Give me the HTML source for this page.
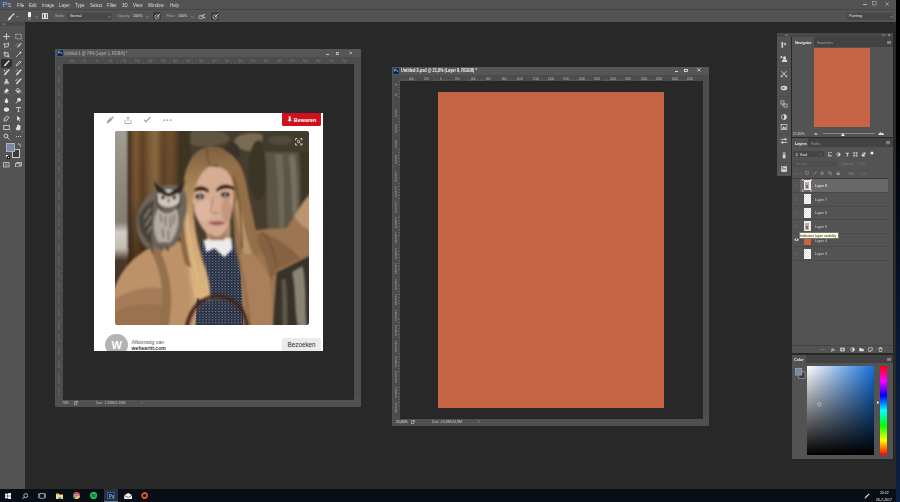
<!DOCTYPE html>
<html><head><meta charset="utf-8"><title>Photoshop</title>
<style>
*{box-sizing:border-box;margin:0;padding:0}
html,body{width:900px;height:502px;overflow:hidden;background:#282828;font-family:"Liberation Sans",sans-serif;}
.a{position:absolute}
.t{position:absolute;white-space:nowrap;line-height:1;color:#d6d6d6}
.m{top:2.5px;font-size:5.3px;color:#dedede;transform:scaleX(0.83);transform-origin:0 0}
.o{top:3.8px;font-size:3.6px}
.rl{font-size:2.3px;color:#8c8c8c}
#menubar{left:0;top:0;width:896px;height:9.4px;background:#535353}
#optbar{left:0;top:9px;width:896px;height:12.6px;background:#535353;border-top:0.7px solid #464646}
#tools{left:0;top:21.6px;width:25.3px;height:468px;background:#535353}
#taskbar{left:0;top:489.2px;width:896px;height:13px;background:#090d15}
#edge{left:896px;top:0;width:4px;height:502px;background:linear-gradient(#000 0%,#000 25%,#0a1a38 70%,#0c2044 100%)}
</style></head><body>
<div class="a" id="edge"></div>
<!-- MENU BAR -->
<div class="a" id="menubar">
 <div class="a" style="left:0;top:0;width:12.4px;height:9px;background:linear-gradient(to right,rgba(58,84,120,0.45),rgba(58,84,120,0.3) 70%,rgba(58,84,120,0))"></div><div class="t" style="left:2.6px;top:1.1px;font-size:7.4px;color:#a2b8d6;letter-spacing:-0.1px">Ps</div>
 <div class="t m" style="left:16.6px">File</div>
 <div class="t m" style="left:28.9px">Edit</div>
 <div class="t m" style="left:41.8px">Image</div>
 <div class="t m" style="left:59px">Layer</div>
 <div class="t m" style="left:75px">Type</div>
 <div class="t m" style="left:90px">Select</div>
 <div class="t m" style="left:106.9px">Filter</div>
 <div class="t m" style="left:122.4px">3D</div>
 <div class="t m" style="left:133.3px">View</div>
 <div class="t m" style="left:148.4px">Window</div>
 <div class="t m" style="left:170px">Help</div>
 <!-- window controls -->
 <div class="a" style="left:863px;top:4px;width:3.6px;height:0.7px;background:#b4b4b4"></div>
 <svg class="a" style="left:872px;top:1.4px" width="4.6" height="4.6" viewBox="0 0 4.6 4.6"><rect x="0.5" y="0.5" width="3.6" height="3.4" fill="none" stroke="#b4b4b4" stroke-width="0.6"/></svg>
 <svg class="a" style="left:884.6px;top:1.5px" width="4" height="4" viewBox="0 0 4 4"><path d="M0.3 0.3 L3.7 3.7 M3.7 0.3 L0.3 3.7" stroke="#c4c4c4" stroke-width="0.6" fill="none"/></svg>
</div>
<!-- OPTIONS BAR -->
<div class="a" id="optbar"><div class="a" style="left:0;top:1.1px">
 <svg class="a" style="left:6.5px;top:1.5px" width="8" height="8" viewBox="0 0 8 8"><path d="M6.9 0.9 L3.4 4.4" stroke="#e4e4e4" stroke-width="1.3" stroke-linecap="round" fill="none"/><path d="M2.7 3.9 L4 5.2 C3.4 6.8 2 7.2 0.7 7.2 C1.6 6.3 1.3 4.8 2.7 3.9Z" fill="#e4e4e4"/></svg>
 <div class="a" style="left:16.2px;top:5.2px;width:2.6px;height:0.6px;background:#808080"></div>
 <div class="a" style="left:27.8px;top:0.6px;width:3.2px;height:5px;background:#f4f4f4;border-radius:0.6px"></div>
 <div class="t" style="left:27.8px;top:7.8px;font-size:2.6px;color:#bbb">35</div>
 <svg class="a chev" style="left:35px;top:4.5px" width="3" height="2" viewBox="0 0 3 2"><path d="M0.2 0.2 L1.5 1.6 L2.8 0.2" stroke="#b8b8b8" stroke-width="0.5" fill="none"/></svg>
 <div class="a" style="left:42px;top:1.6px;width:6.4px;height:6.2px;background:#dcdcdc;border-radius:0.6px"></div>
 <div class="a" style="left:43px;top:3.4px;width:4.4px;height:3.4px;background:#535353"></div>
 <div class="a" style="left:44.4px;top:2.4px;width:1.6px;height:4.4px;background:#dcdcdc"></div>
 <div class="t o" style="left:55px;color:#a9a9a9">Mode:</div>
 <div class="a" style="left:67px;top:1.6px;width:45px;height:7.2px;background:#484848;border-radius:1px"></div>
 <div class="t o" style="left:70px;color:#e2e2e2">Normal</div>
 <svg class="a chev" style="left:108px;top:4.5px" width="3" height="2" viewBox="0 0 3 2"><path d="M0.2 0.2 L1.5 1.6 L2.8 0.2" stroke="#b8b8b8" stroke-width="0.5" fill="none"/></svg>
 <div class="t o" style="left:117px;color:#a9a9a9">Opacity:</div>
 <div class="t o" style="left:133px;color:#e2e2e2">100%</div>
 <svg class="a chev" style="left:146px;top:4.5px" width="3" height="2" viewBox="0 0 3 2"><path d="M0.2 0.2 L1.5 1.6 L2.8 0.2" stroke="#b8b8b8" stroke-width="0.5" fill="none"/></svg>
 <div class="a" style="left:152.5px;top:1.2px;width:8.5px;height:8px;background:#3c3c3c;border-radius:1px"></div>
 <svg class="a" style="left:153.5px;top:2px" width="7" height="7" viewBox="0 0 7 7"><circle cx="3" cy="4" r="2.1" stroke="#d8d8d8" stroke-width="0.6" fill="none"/><path d="M2.6 4.4 L6.2 0.8" stroke="#e4e4e4" stroke-width="0.9"/></svg>
 <div class="t o" style="left:166.6px;color:#a9a9a9">Flow:</div>
 <div class="t o" style="left:178px;color:#e2e2e2">100%</div>
 <svg class="a chev" style="left:191px;top:4.5px" width="3" height="2" viewBox="0 0 3 2"><path d="M0.2 0.2 L1.5 1.6 L2.8 0.2" stroke="#b8b8b8" stroke-width="0.5" fill="none"/></svg>
 <svg class="a" style="left:197.5px;top:2px" width="8" height="7" viewBox="0 0 8 7"><ellipse cx="3" cy="4" rx="2.4" ry="1.7" stroke="#d8d8d8" stroke-width="0.6" fill="none"/><path d="M3 3.8 L7 1 M5.2 4.6 L7.4 4.6" stroke="#e4e4e4" stroke-width="0.8"/></svg>
 <div class="a" style="left:210.5px;top:1.2px;width:8.5px;height:8px;background:#3c3c3c;border-radius:1px"></div>
 <svg class="a" style="left:211.5px;top:2px" width="7" height="7" viewBox="0 0 7 7"><circle cx="3" cy="4" r="2.1" stroke="#d8d8d8" stroke-width="0.6" fill="none"/><path d="M2.6 4.4 L6.2 0.8" stroke="#e4e4e4" stroke-width="0.9"/></svg>
 <!-- workspace dropdown -->
 <div class="a" style="left:846.5px;top:1.6px;width:46.5px;height:7.4px;background:#484848;border-radius:1px"></div>
 <div class="t o" style="left:849px;color:#e2e2e2">Painting</div>
 <svg class="a chev" style="left:889.5px;top:4.5px" width="3" height="2" viewBox="0 0 3 2"><path d="M0.2 0.2 L1.5 1.6 L2.8 0.2" stroke="#b8b8b8" stroke-width="0.5" fill="none"/></svg>
</div></div>
<!-- TOOLS -->
<div class="a" id="tools">
<div class="a" style="left:0;top:0;width:25px;height:4px;background:#484848"></div>
<svg class="a" style="left:2px;top:1px" width="4" height="2.4" viewBox="0 0 4 2.4"><path d="M0.3 0.3 L1.3 1.2 L0.3 2.1 M2 0.3 L3 1.2 L2 2.1" stroke="#c8c8c8" stroke-width="0.45" fill="none"/></svg>
<div class="a" style="left:1.2px;top:37.70px;width:10.6px;height:8.8px;background:#2f2f2f;border-radius:1px"></div>
<svg class="a" style="left:2.79px;top:11.29px" width="7.02" height="7.02" viewBox="0 0 9 9"><path d="M4.5 0.8 V8.2 M0.8 4.5 H8.2" stroke="#e0e0e0" stroke-width="1"/><path d="M4.5 0.2 L5.7 1.8 H3.3Z M4.5 8.8 L5.7 7.2 H3.3Z M0.2 4.5 L1.8 3.3 V5.7Z M8.8 4.5 L7.2 3.3 V5.7Z" fill="#e0e0e0"/></svg>
<svg class="a" style="left:14.69px;top:11.29px" width="7.02" height="7.02" viewBox="0 0 9 9"><rect x="1" y="1.6" width="7" height="5.8" fill="none" stroke="#e0e0e0" stroke-width="0.95" stroke-dasharray="1.2 0.7"/></svg>
<svg class="a" style="left:21.60px;top:17.60px" width="1.4" height="1.4" viewBox="0 0 1.4 1.4"><path d="M1.4 0 V1.4 H0Z" fill="#bdbdbd"/></svg>
<svg class="a" style="left:2.79px;top:20.39px" width="7.02" height="7.02" viewBox="0 0 9 9"><path d="M1.2 1.8 L4 3 L7.4 1.2 L6.6 6 L2.6 6.4 Z" fill="none" stroke="#e0e0e0" stroke-width="0.95"/><path d="M2.6 6.4 L1.4 8" stroke="#e0e0e0" stroke-width="0.95"/></svg>
<svg class="a" style="left:9.70px;top:26.70px" width="1.4" height="1.4" viewBox="0 0 1.4 1.4"><path d="M1.4 0 V1.4 H0Z" fill="#bdbdbd"/></svg>
<svg class="a" style="left:14.69px;top:20.39px" width="7.02" height="7.02" viewBox="0 0 9 9"><ellipse cx="3.6" cy="4.6" rx="2.6" ry="2.2" fill="none" stroke="#e0e0e0" stroke-width="0.5" stroke-dasharray="1 0.6"/><path d="M7.8 1.6 L4 5.6" stroke="#e0e0e0" stroke-width="1.3" stroke-linecap="round"/></svg>
<svg class="a" style="left:21.60px;top:26.70px" width="1.4" height="1.4" viewBox="0 0 1.4 1.4"><path d="M1.4 0 V1.4 H0Z" fill="#bdbdbd"/></svg>
<svg class="a" style="left:2.79px;top:29.49px" width="7.02" height="7.02" viewBox="0 0 9 9"><path d="M2.4 0.6 V6.6 H8.4 M0.6 2.4 H6.6 V8.4" fill="none" stroke="#e0e0e0" stroke-width="1.1"/></svg>
<svg class="a" style="left:9.70px;top:35.80px" width="1.4" height="1.4" viewBox="0 0 1.4 1.4"><path d="M1.4 0 V1.4 H0Z" fill="#bdbdbd"/></svg>
<svg class="a" style="left:14.69px;top:29.49px" width="7.02" height="7.02" viewBox="0 0 9 9"><path d="M6.8 2.2 L2.4 6.6 L1.4 7.6" stroke="#e0e0e0" stroke-width="1" stroke-linecap="round"/><circle cx="7" cy="2" r="1.3" fill="#e0e0e0"/></svg>
<svg class="a" style="left:21.60px;top:35.80px" width="1.4" height="1.4" viewBox="0 0 1.4 1.4"><path d="M1.4 0 V1.4 H0Z" fill="#bdbdbd"/></svg>
<svg class="a" style="left:2.79px;top:38.59px" width="7.02" height="7.02" viewBox="0 0 9 9"><path d="M7.6 1.4 L3.9 5.1" stroke="#e0e0e0" stroke-width="1.8" stroke-linecap="round" fill="none"/><path d="M3 4.4 L4.6 6 C3.9 7.6 2.4 8 0.9 8 C1.9 7 1.6 5.4 3 4.4Z" fill="#e0e0e0"/></svg>
<svg class="a" style="left:9.70px;top:44.90px" width="1.4" height="1.4" viewBox="0 0 1.4 1.4"><path d="M1.4 0 V1.4 H0Z" fill="#bdbdbd"/></svg>
<svg class="a" style="left:14.69px;top:38.59px" width="7.02" height="7.02" viewBox="0 0 9 9"><path d="M6.6 1.2 L7.8 2.4 L3.2 7 L1.4 7.6 L2 5.8 Z" fill="none" stroke="#e0e0e0" stroke-width="0.95"/></svg>
<svg class="a" style="left:21.60px;top:44.90px" width="1.4" height="1.4" viewBox="0 0 1.4 1.4"><path d="M1.4 0 V1.4 H0Z" fill="#bdbdbd"/></svg>
<svg class="a" style="left:2.79px;top:47.69px" width="7.02" height="7.02" viewBox="0 0 9 9"><path d="M7.6 1.4 L3.9 5.1" stroke="#e0e0e0" stroke-width="1.8" stroke-linecap="round" fill="none"/><path d="M3 4.4 L4.6 6 C3.9 7.6 2.4 8 0.9 8 C1.9 7 1.6 5.4 3 4.4Z" fill="#e0e0e0"/><circle cx="2" cy="2.2" r="0.9" fill="#e0e0e0"/><circle cx="4.2" cy="1.6" r="0.6" fill="#e0e0e0"/></svg>
<svg class="a" style="left:9.70px;top:54.00px" width="1.4" height="1.4" viewBox="0 0 1.4 1.4"><path d="M1.4 0 V1.4 H0Z" fill="#bdbdbd"/></svg>
<svg class="a" style="left:14.69px;top:47.69px" width="7.02" height="7.02" viewBox="0 0 9 9"><path d="M7.6 1.4 L3.9 5.1" stroke="#e0e0e0" stroke-width="1.8" stroke-linecap="round" fill="none"/><path d="M3 4.4 L4.6 6 C3.9 7.6 2.4 8 0.9 8 C1.9 7 1.6 5.4 3 4.4Z" fill="#e0e0e0"/><path d="M1 3.4 A2.6 2.6 0 0 1 4 1.2" stroke="#e0e0e0" stroke-width="0.6" fill="none"/></svg>
<svg class="a" style="left:21.60px;top:54.00px" width="1.4" height="1.4" viewBox="0 0 1.4 1.4"><path d="M1.4 0 V1.4 H0Z" fill="#bdbdbd"/></svg>
<svg class="a" style="left:2.79px;top:56.79px" width="7.02" height="7.02" viewBox="0 0 9 9"><path d="M3.4 1.2 H5.6 V3.8 L7.4 5 V6.2 H1.6 V5 L3.4 3.8Z" fill="#e0e0e0"/><rect x="1.2" y="7" width="6.6" height="0.9" fill="#e0e0e0"/></svg>
<svg class="a" style="left:9.70px;top:63.10px" width="1.4" height="1.4" viewBox="0 0 1.4 1.4"><path d="M1.4 0 V1.4 H0Z" fill="#bdbdbd"/></svg>
<svg class="a" style="left:14.69px;top:56.79px" width="7.02" height="7.02" viewBox="0 0 9 9"><path d="M7.6 1.4 L3.9 5.1" stroke="#e0e0e0" stroke-width="1.8" stroke-linecap="round" fill="none"/><path d="M3 4.4 L4.6 6 C3.9 7.6 2.4 8 0.9 8 C1.9 7 1.6 5.4 3 4.4Z" fill="#e0e0e0"/><path d="M1 3.6 A2.6 2.6 0 0 1 4.2 1.2 M1 3.6 L0.4 2.4 M1 3.6 L2.2 3" stroke="#e0e0e0" stroke-width="0.6" fill="none"/></svg>
<svg class="a" style="left:21.60px;top:63.10px" width="1.4" height="1.4" viewBox="0 0 1.4 1.4"><path d="M1.4 0 V1.4 H0Z" fill="#bdbdbd"/></svg>
<svg class="a" style="left:2.79px;top:65.89px" width="7.02" height="7.02" viewBox="0 0 9 9"><path d="M4.8 1.6 L7.6 4.4 L4.8 7.2 H2.8 L1.4 5.8 Z" fill="#e0e0e0"/><path d="M1 7.8 H7.6" stroke="#e0e0e0" stroke-width="0.6"/></svg>
<svg class="a" style="left:9.70px;top:72.20px" width="1.4" height="1.4" viewBox="0 0 1.4 1.4"><path d="M1.4 0 V1.4 H0Z" fill="#bdbdbd"/></svg>
<svg class="a" style="left:14.69px;top:65.89px" width="7.02" height="7.02" viewBox="0 0 9 9"><path d="M3.6 1.4 L7.2 5 L4.2 8 L0.9 4.6 Z" fill="none" stroke="#e0e0e0" stroke-width="0.95"/><path d="M7.4 5.4 C8.2 6.6 8.2 7.4 7.6 7.8 C7 7.4 7 6.6 7.4 5.4Z" fill="#e0e0e0"/><path d="M1.4 4.6 H6.6 L4.2 7.4Z" fill="#e0e0e0"/></svg>
<svg class="a" style="left:21.60px;top:72.20px" width="1.4" height="1.4" viewBox="0 0 1.4 1.4"><path d="M1.4 0 V1.4 H0Z" fill="#bdbdbd"/></svg>
<svg class="a" style="left:2.79px;top:74.99px" width="7.02" height="7.02" viewBox="0 0 9 9"><path d="M4.5 1 C6 3.2 6.8 4.6 6.8 5.8 A2.3 2.3 0 0 1 2.2 5.8 C2.2 4.6 3 3.2 4.5 1Z" fill="#e0e0e0"/></svg>
<svg class="a" style="left:9.70px;top:81.30px" width="1.4" height="1.4" viewBox="0 0 1.4 1.4"><path d="M1.4 0 V1.4 H0Z" fill="#bdbdbd"/></svg>
<svg class="a" style="left:14.69px;top:74.99px" width="7.02" height="7.02" viewBox="0 0 9 9"><circle cx="5.2" cy="3.4" r="2.4" fill="#e0e0e0"/><path d="M3.6 5 L1.6 7.8" stroke="#e0e0e0" stroke-width="1.1" stroke-linecap="round"/></svg>
<svg class="a" style="left:21.60px;top:81.30px" width="1.4" height="1.4" viewBox="0 0 1.4 1.4"><path d="M1.4 0 V1.4 H0Z" fill="#bdbdbd"/></svg>
<svg class="a" style="left:2.79px;top:84.09px" width="7.02" height="7.02" viewBox="0 0 9 9"><path d="M1.2 3 L5 1.6 L7.8 3.2 L7.8 6 L4 7.6 L1.2 6Z" fill="#e0e0e0"/></svg>
<svg class="a" style="left:9.70px;top:90.40px" width="1.4" height="1.4" viewBox="0 0 1.4 1.4"><path d="M1.4 0 V1.4 H0Z" fill="#bdbdbd"/></svg>
<svg class="a" style="left:14.69px;top:84.09px" width="7.02" height="7.02" viewBox="0 0 9 9"><path d="M1.4 1.4 H7.6 V2.8 H7 V2.2 H5 V7.2 H6 V7.8 H3 V7.2 H4 V2.2 H2 V2.8 H1.4Z" fill="#e0e0e0"/></svg>
<svg class="a" style="left:21.60px;top:90.40px" width="1.4" height="1.4" viewBox="0 0 1.4 1.4"><path d="M1.4 0 V1.4 H0Z" fill="#bdbdbd"/></svg>
<svg class="a" style="left:2.79px;top:93.19px" width="7.02" height="7.02" viewBox="0 0 9 9"><path d="M5.6 1 L8 3.4 L6.6 4.2 L5 7.2 L1.2 7.8 L1.8 4 L4.8 2.4Z" fill="none" stroke="#e0e0e0" stroke-width="0.95"/><circle cx="3.8" cy="5.2" r="0.7" fill="#e0e0e0"/></svg>
<svg class="a" style="left:9.70px;top:99.50px" width="1.4" height="1.4" viewBox="0 0 1.4 1.4"><path d="M1.4 0 V1.4 H0Z" fill="#bdbdbd"/></svg>
<svg class="a" style="left:14.69px;top:93.19px" width="7.02" height="7.02" viewBox="0 0 9 9"><path d="M2.6 1 L2.6 7.4 L4.2 5.8 L5.4 8.2 L6.4 7.7 L5.2 5.4 L7.4 5.2Z" fill="#e0e0e0"/></svg>
<svg class="a" style="left:21.60px;top:99.50px" width="1.4" height="1.4" viewBox="0 0 1.4 1.4"><path d="M1.4 0 V1.4 H0Z" fill="#bdbdbd"/></svg>
<svg class="a" style="left:2.79px;top:102.29px" width="7.02" height="7.02" viewBox="0 0 9 9"><rect x="1" y="1.8" width="7" height="5.4" fill="none" stroke="#e0e0e0" stroke-width="1"/></svg>
<svg class="a" style="left:9.70px;top:108.60px" width="1.4" height="1.4" viewBox="0 0 1.4 1.4"><path d="M1.4 0 V1.4 H0Z" fill="#bdbdbd"/></svg>
<svg class="a" style="left:14.69px;top:102.29px" width="7.02" height="7.02" viewBox="0 0 9 9"><path d="M2.2 8 C1 6 0.6 5 1.2 4.4 C1.8 4 2.4 4.8 2.6 5.2 V2 C2.6 1.2 3.6 1.2 3.6 2 V1.2 C3.6 0.4 4.8 0.4 4.8 1.2 V1.6 C4.8 0.9 5.9 0.9 5.9 1.7 V2.4 C5.9 1.8 7 1.8 7 2.6 V5.8 C7 7 6.6 7.4 6.2 8Z" fill="#e0e0e0"/></svg>
<svg class="a" style="left:21.60px;top:108.60px" width="1.4" height="1.4" viewBox="0 0 1.4 1.4"><path d="M1.4 0 V1.4 H0Z" fill="#bdbdbd"/></svg>
<svg class="a" style="left:2.79px;top:111.39px" width="7.02" height="7.02" viewBox="0 0 9 9"><circle cx="3.8" cy="3.8" r="2.5" fill="none" stroke="#e0e0e0" stroke-width="1.1"/><path d="M5.6 5.6 L8 8" stroke="#e0e0e0" stroke-width="1.1" stroke-linecap="round"/></svg>
<svg class="a" style="left:9.70px;top:117.70px" width="1.4" height="1.4" viewBox="0 0 1.4 1.4"><path d="M1.4 0 V1.4 H0Z" fill="#bdbdbd"/></svg>
<svg class="a" style="left:14.69px;top:111.39px" width="7.02" height="7.02" viewBox="0 0 9 9"><circle cx="2" cy="4.5" r="0.7" fill="#e0e0e0"/><circle cx="4.5" cy="4.5" r="0.7" fill="#e0e0e0"/><circle cx="7" cy="4.5" r="0.7" fill="#e0e0e0"/></svg>
<div class="a" style="left:11.6px;top:127.6px;width:8.4px;height:8.4px;background:#3a3a3a;border:0.7px solid #cfcfcf"></div>
<div class="a" style="left:6px;top:121.9px;width:8.8px;height:8.2px;background:#7b899e;border:0.6px solid #aab2be"></div>
<svg class="a" style="left:16.6px;top:121.6px" width="4.5" height="4.5" viewBox="0 0 4.5 4.5"><path d="M0.8 1 H3.4 V3.6 M0.8 1 L1.8 0.2 M0.8 1 L1.8 1.8 M3.4 3.6 L2.6 2.6 M3.4 3.6 L4.2 2.6" stroke="#cfcfcf" stroke-width="0.5" fill="none"/></svg>
<div class="a" style="left:5.8px;top:133.2px;width:2.6px;height:2.6px;background:#111;border:0.4px solid #eee"></div>
<div class="a" style="left:7.2px;top:134.6px;width:2.6px;height:2.6px;background:#fff;border:0.4px solid #222"></div>
<svg class="a" style="left:3px;top:140.4px" width="6.6" height="5.6" viewBox="0 0 8 7"><rect x="0.6" y="0.8" width="6.8" height="5.4" fill="none" stroke="#d6d6d6" stroke-width="0.95"/><circle cx="4" cy="3.5" r="1.3" fill="none" stroke="#d6d6d6" stroke-width="0.6"/></svg>
<svg class="a" style="left:14.8px;top:140.2px" width="7.2" height="5.6" viewBox="0 0 9 7"><rect x="2.4" y="0.6" width="5.6" height="4" fill="none" stroke="#d6d6d6" stroke-width="0.95"/><rect x="0.6" y="2.2" width="5.6" height="4" fill="#535353" stroke="#d6d6d6" stroke-width="0.95"/></svg>
</div>
<!-- WINDOW 1 -->
<div class="a" id="w1" style="left:55.4px;top:49.4px;width:305.4px;height:357.2px;background:#535353">
<div class="a" style="left:0;top:0;width:305.4px;height:8px;background:#565656"></div>
<svg class="a" style="left:1.2px;top:1.1px" width="6.2" height="6.2" viewBox="0 0 6.2 6.2"><rect x="0.2" y="0.2" width="5.8" height="5.8" fill="#0a2038" stroke="#2f5f96" stroke-width="0.4"/><text x="1" y="4.5" font-family="Liberation Sans,sans-serif" font-weight="bold" font-size="3.6" fill="#8cc0f8">Ps</text></svg>
<div class="t" style="left:8.60px;top:3.02px;font-size:4.53px;color:#b4b4b4;transform:scaleX(0.86);transform-origin:0 0">Untitled-1 @ 74% (Layer 1, RGB/8) *</div>
<svg class="a" style="left:270.5px;top:4.3px" width="3.6" height="1.2" viewBox="0 0 3.6 1.2"><rect x="0" y="0.1" width="3.4" height="0.9" fill="#c8c8c8"/></svg>
<svg class="a" style="left:280.60px;top:2.60px" width="3.4" height="3" viewBox="0 0 3.4 3"><rect x="0.5" y="0.5" width="2.4" height="2" fill="none" stroke="#c8c8c8" stroke-width="0.8"/></svg>
<svg class="a" style="left:293.3px;top:1.7px" width="3.8" height="3.8" viewBox="0 0 3.8 3.8"><path d="M0.3 0.3 L3.5 3.5 M3.5 0.3 L0.3 3.5" stroke="#c8c8c8" stroke-width="0.7" fill="none"/></svg>
<div class="a" style="left:0.6px;top:8px;width:298px;height:6.2px;background:#4c4c4c"></div>
<div class="a" style="left:0.6px;top:8px;width:7px;height:342px;background:#4c4c4c"></div>
<div class="a" style="left:8px;top:12px;width:290.6px;height:2.2px;background:repeating-linear-gradient(to right,rgba(255,255,255,0.045) 0,rgba(255,255,255,0.045) 0.6px,transparent 0.6px,transparent 2.59px)"></div>
<div class="a" style="left:5.4px;top:14.4px;width:2.2px;height:335.4px;background:repeating-linear-gradient(to bottom,rgba(255,255,255,0.045) 0,rgba(255,255,255,0.045) 0.6px,transparent 0.6px,transparent 2.59px)"></div>
<div class="t" style="left:14.50px;top:10.45px;font-size:3.2px;color:#7e7e7e;transform:scaleX(0.86);transform-origin:0 0">100</div>
<div class="t" style="left:27.45px;top:10.45px;font-size:3.2px;color:#7e7e7e;transform:scaleX(0.86);transform-origin:0 0">50</div>
<div class="t" style="left:40.40px;top:10.45px;font-size:3.2px;color:#7e7e7e;transform:scaleX(0.86);transform-origin:0 0">0</div>
<div class="t" style="left:53.35px;top:10.45px;font-size:3.2px;color:#7e7e7e;transform:scaleX(0.86);transform-origin:0 0">50</div>
<div class="t" style="left:66.30px;top:10.45px;font-size:3.2px;color:#7e7e7e;transform:scaleX(0.86);transform-origin:0 0">100</div>
<div class="t" style="left:79.25px;top:10.45px;font-size:3.2px;color:#7e7e7e;transform:scaleX(0.86);transform-origin:0 0">150</div>
<div class="t" style="left:92.20px;top:10.45px;font-size:3.2px;color:#7e7e7e;transform:scaleX(0.86);transform-origin:0 0">200</div>
<div class="t" style="left:105.15px;top:10.45px;font-size:3.2px;color:#7e7e7e;transform:scaleX(0.86);transform-origin:0 0">250</div>
<div class="t" style="left:118.10px;top:10.45px;font-size:3.2px;color:#7e7e7e;transform:scaleX(0.86);transform-origin:0 0">300</div>
<div class="t" style="left:131.05px;top:10.45px;font-size:3.2px;color:#7e7e7e;transform:scaleX(0.86);transform-origin:0 0">350</div>
<div class="t" style="left:144.00px;top:10.45px;font-size:3.2px;color:#7e7e7e;transform:scaleX(0.86);transform-origin:0 0">400</div>
<div class="t" style="left:156.95px;top:10.45px;font-size:3.2px;color:#7e7e7e;transform:scaleX(0.86);transform-origin:0 0">450</div>
<div class="t" style="left:169.90px;top:10.45px;font-size:3.2px;color:#7e7e7e;transform:scaleX(0.86);transform-origin:0 0">500</div>
<div class="t" style="left:182.85px;top:10.45px;font-size:3.2px;color:#7e7e7e;transform:scaleX(0.86);transform-origin:0 0">550</div>
<div class="t" style="left:195.80px;top:10.45px;font-size:3.2px;color:#7e7e7e;transform:scaleX(0.86);transform-origin:0 0">600</div>
<div class="t" style="left:208.75px;top:10.45px;font-size:3.2px;color:#7e7e7e;transform:scaleX(0.86);transform-origin:0 0">650</div>
<div class="t" style="left:221.70px;top:10.45px;font-size:3.2px;color:#7e7e7e;transform:scaleX(0.86);transform-origin:0 0">700</div>
<div class="t" style="left:234.65px;top:10.45px;font-size:3.2px;color:#7e7e7e;transform:scaleX(0.86);transform-origin:0 0">750</div>
<div class="t" style="left:247.60px;top:10.45px;font-size:3.2px;color:#7e7e7e;transform:scaleX(0.86);transform-origin:0 0">800</div>
<div class="t" style="left:260.55px;top:10.45px;font-size:3.2px;color:#7e7e7e;transform:scaleX(0.86);transform-origin:0 0">850</div>
<div class="t" style="left:273.50px;top:10.45px;font-size:3.2px;color:#7e7e7e;transform:scaleX(0.86);transform-origin:0 0">900</div>
<div class="t" style="left:286.45px;top:10.45px;font-size:3.2px;color:#7e7e7e;transform:scaleX(0.86);transform-origin:0 0">950</div>
<div class="t" style="left:2.20px;top:16.35px;font-size:3.2px;color:#7e7e7e;transform:scaleX(0.86);transform-origin:0 0">0</div>
<div class="t" style="left:2.20px;top:19.05px;font-size:3.2px;color:#7e7e7e;transform:scaleX(0.86);transform-origin:0 0">0</div>
<div class="t" style="left:2.20px;top:26.60px;font-size:3.2px;color:#7e7e7e;transform:scaleX(0.86);transform-origin:0 0">1</div>
<div class="t" style="left:2.20px;top:29.30px;font-size:3.2px;color:#7e7e7e;transform:scaleX(0.86);transform-origin:0 0">5</div>
<div class="t" style="left:2.20px;top:32.00px;font-size:3.2px;color:#7e7e7e;transform:scaleX(0.86);transform-origin:0 0">0</div>
<div class="t" style="left:2.20px;top:39.55px;font-size:3.2px;color:#7e7e7e;transform:scaleX(0.86);transform-origin:0 0">1</div>
<div class="t" style="left:2.20px;top:42.25px;font-size:3.2px;color:#7e7e7e;transform:scaleX(0.86);transform-origin:0 0">0</div>
<div class="t" style="left:2.20px;top:44.95px;font-size:3.2px;color:#7e7e7e;transform:scaleX(0.86);transform-origin:0 0">0</div>
<div class="t" style="left:2.20px;top:52.50px;font-size:3.2px;color:#7e7e7e;transform:scaleX(0.86);transform-origin:0 0">5</div>
<div class="t" style="left:2.20px;top:55.20px;font-size:3.2px;color:#7e7e7e;transform:scaleX(0.86);transform-origin:0 0">0</div>
<div class="t" style="left:2.20px;top:65.45px;font-size:3.2px;color:#7e7e7e;transform:scaleX(0.86);transform-origin:0 0">0</div>
<div class="t" style="left:2.20px;top:78.40px;font-size:3.2px;color:#7e7e7e;transform:scaleX(0.86);transform-origin:0 0">5</div>
<div class="t" style="left:2.20px;top:81.10px;font-size:3.2px;color:#7e7e7e;transform:scaleX(0.86);transform-origin:0 0">0</div>
<div class="t" style="left:2.20px;top:91.35px;font-size:3.2px;color:#7e7e7e;transform:scaleX(0.86);transform-origin:0 0">1</div>
<div class="t" style="left:2.20px;top:94.05px;font-size:3.2px;color:#7e7e7e;transform:scaleX(0.86);transform-origin:0 0">0</div>
<div class="t" style="left:2.20px;top:96.75px;font-size:3.2px;color:#7e7e7e;transform:scaleX(0.86);transform-origin:0 0">0</div>
<div class="t" style="left:2.20px;top:104.30px;font-size:3.2px;color:#7e7e7e;transform:scaleX(0.86);transform-origin:0 0">1</div>
<div class="t" style="left:2.20px;top:107.00px;font-size:3.2px;color:#7e7e7e;transform:scaleX(0.86);transform-origin:0 0">5</div>
<div class="t" style="left:2.20px;top:109.70px;font-size:3.2px;color:#7e7e7e;transform:scaleX(0.86);transform-origin:0 0">0</div>
<div class="t" style="left:2.20px;top:117.25px;font-size:3.2px;color:#7e7e7e;transform:scaleX(0.86);transform-origin:0 0">2</div>
<div class="t" style="left:2.20px;top:119.95px;font-size:3.2px;color:#7e7e7e;transform:scaleX(0.86);transform-origin:0 0">0</div>
<div class="t" style="left:2.20px;top:122.65px;font-size:3.2px;color:#7e7e7e;transform:scaleX(0.86);transform-origin:0 0">0</div>
<div class="t" style="left:2.20px;top:130.20px;font-size:3.2px;color:#7e7e7e;transform:scaleX(0.86);transform-origin:0 0">2</div>
<div class="t" style="left:2.20px;top:132.90px;font-size:3.2px;color:#7e7e7e;transform:scaleX(0.86);transform-origin:0 0">5</div>
<div class="t" style="left:2.20px;top:135.60px;font-size:3.2px;color:#7e7e7e;transform:scaleX(0.86);transform-origin:0 0">0</div>
<div class="t" style="left:2.20px;top:143.15px;font-size:3.2px;color:#7e7e7e;transform:scaleX(0.86);transform-origin:0 0">3</div>
<div class="t" style="left:2.20px;top:145.85px;font-size:3.2px;color:#7e7e7e;transform:scaleX(0.86);transform-origin:0 0">0</div>
<div class="t" style="left:2.20px;top:148.55px;font-size:3.2px;color:#7e7e7e;transform:scaleX(0.86);transform-origin:0 0">0</div>
<div class="t" style="left:2.20px;top:156.10px;font-size:3.2px;color:#7e7e7e;transform:scaleX(0.86);transform-origin:0 0">3</div>
<div class="t" style="left:2.20px;top:158.80px;font-size:3.2px;color:#7e7e7e;transform:scaleX(0.86);transform-origin:0 0">5</div>
<div class="t" style="left:2.20px;top:161.50px;font-size:3.2px;color:#7e7e7e;transform:scaleX(0.86);transform-origin:0 0">0</div>
<div class="t" style="left:2.20px;top:169.05px;font-size:3.2px;color:#7e7e7e;transform:scaleX(0.86);transform-origin:0 0">4</div>
<div class="t" style="left:2.20px;top:171.75px;font-size:3.2px;color:#7e7e7e;transform:scaleX(0.86);transform-origin:0 0">0</div>
<div class="t" style="left:2.20px;top:174.45px;font-size:3.2px;color:#7e7e7e;transform:scaleX(0.86);transform-origin:0 0">0</div>
<div class="t" style="left:2.20px;top:182.00px;font-size:3.2px;color:#7e7e7e;transform:scaleX(0.86);transform-origin:0 0">4</div>
<div class="t" style="left:2.20px;top:184.70px;font-size:3.2px;color:#7e7e7e;transform:scaleX(0.86);transform-origin:0 0">5</div>
<div class="t" style="left:2.20px;top:187.40px;font-size:3.2px;color:#7e7e7e;transform:scaleX(0.86);transform-origin:0 0">0</div>
<div class="t" style="left:2.20px;top:194.95px;font-size:3.2px;color:#7e7e7e;transform:scaleX(0.86);transform-origin:0 0">5</div>
<div class="t" style="left:2.20px;top:197.65px;font-size:3.2px;color:#7e7e7e;transform:scaleX(0.86);transform-origin:0 0">0</div>
<div class="t" style="left:2.20px;top:200.35px;font-size:3.2px;color:#7e7e7e;transform:scaleX(0.86);transform-origin:0 0">0</div>
<div class="t" style="left:2.20px;top:207.90px;font-size:3.2px;color:#7e7e7e;transform:scaleX(0.86);transform-origin:0 0">5</div>
<div class="t" style="left:2.20px;top:210.60px;font-size:3.2px;color:#7e7e7e;transform:scaleX(0.86);transform-origin:0 0">5</div>
<div class="t" style="left:2.20px;top:213.30px;font-size:3.2px;color:#7e7e7e;transform:scaleX(0.86);transform-origin:0 0">0</div>
<div class="t" style="left:2.20px;top:220.85px;font-size:3.2px;color:#7e7e7e;transform:scaleX(0.86);transform-origin:0 0">6</div>
<div class="t" style="left:2.20px;top:223.55px;font-size:3.2px;color:#7e7e7e;transform:scaleX(0.86);transform-origin:0 0">0</div>
<div class="t" style="left:2.20px;top:226.25px;font-size:3.2px;color:#7e7e7e;transform:scaleX(0.86);transform-origin:0 0">0</div>
<div class="t" style="left:2.20px;top:233.80px;font-size:3.2px;color:#7e7e7e;transform:scaleX(0.86);transform-origin:0 0">6</div>
<div class="t" style="left:2.20px;top:236.50px;font-size:3.2px;color:#7e7e7e;transform:scaleX(0.86);transform-origin:0 0">5</div>
<div class="t" style="left:2.20px;top:239.20px;font-size:3.2px;color:#7e7e7e;transform:scaleX(0.86);transform-origin:0 0">0</div>
<div class="t" style="left:2.20px;top:246.75px;font-size:3.2px;color:#7e7e7e;transform:scaleX(0.86);transform-origin:0 0">7</div>
<div class="t" style="left:2.20px;top:249.45px;font-size:3.2px;color:#7e7e7e;transform:scaleX(0.86);transform-origin:0 0">0</div>
<div class="t" style="left:2.20px;top:252.15px;font-size:3.2px;color:#7e7e7e;transform:scaleX(0.86);transform-origin:0 0">0</div>
<div class="t" style="left:2.20px;top:259.70px;font-size:3.2px;color:#7e7e7e;transform:scaleX(0.86);transform-origin:0 0">7</div>
<div class="t" style="left:2.20px;top:262.40px;font-size:3.2px;color:#7e7e7e;transform:scaleX(0.86);transform-origin:0 0">5</div>
<div class="t" style="left:2.20px;top:265.10px;font-size:3.2px;color:#7e7e7e;transform:scaleX(0.86);transform-origin:0 0">0</div>
<div class="t" style="left:2.20px;top:272.65px;font-size:3.2px;color:#7e7e7e;transform:scaleX(0.86);transform-origin:0 0">8</div>
<div class="t" style="left:2.20px;top:275.35px;font-size:3.2px;color:#7e7e7e;transform:scaleX(0.86);transform-origin:0 0">0</div>
<div class="t" style="left:2.20px;top:278.05px;font-size:3.2px;color:#7e7e7e;transform:scaleX(0.86);transform-origin:0 0">0</div>
<div class="t" style="left:2.20px;top:285.60px;font-size:3.2px;color:#7e7e7e;transform:scaleX(0.86);transform-origin:0 0">8</div>
<div class="t" style="left:2.20px;top:288.30px;font-size:3.2px;color:#7e7e7e;transform:scaleX(0.86);transform-origin:0 0">5</div>
<div class="t" style="left:2.20px;top:291.00px;font-size:3.2px;color:#7e7e7e;transform:scaleX(0.86);transform-origin:0 0">0</div>
<div class="t" style="left:2.20px;top:298.55px;font-size:3.2px;color:#7e7e7e;transform:scaleX(0.86);transform-origin:0 0">9</div>
<div class="t" style="left:2.20px;top:301.25px;font-size:3.2px;color:#7e7e7e;transform:scaleX(0.86);transform-origin:0 0">0</div>
<div class="t" style="left:2.20px;top:303.95px;font-size:3.2px;color:#7e7e7e;transform:scaleX(0.86);transform-origin:0 0">0</div>
<div class="t" style="left:2.20px;top:311.50px;font-size:3.2px;color:#7e7e7e;transform:scaleX(0.86);transform-origin:0 0">9</div>
<div class="t" style="left:2.20px;top:314.20px;font-size:3.2px;color:#7e7e7e;transform:scaleX(0.86);transform-origin:0 0">5</div>
<div class="t" style="left:2.20px;top:316.90px;font-size:3.2px;color:#7e7e7e;transform:scaleX(0.86);transform-origin:0 0">0</div>
<div class="t" style="left:2.20px;top:324.45px;font-size:3.2px;color:#7e7e7e;transform:scaleX(0.86);transform-origin:0 0">1</div>
<div class="t" style="left:2.20px;top:327.15px;font-size:3.2px;color:#7e7e7e;transform:scaleX(0.86);transform-origin:0 0">0</div>
<div class="t" style="left:2.20px;top:329.85px;font-size:3.2px;color:#7e7e7e;transform:scaleX(0.86);transform-origin:0 0">0</div>
<div class="t" style="left:2.20px;top:332.55px;font-size:3.2px;color:#7e7e7e;transform:scaleX(0.86);transform-origin:0 0">0</div>
<div class="t" style="left:2.20px;top:337.40px;font-size:3.2px;color:#7e7e7e;transform:scaleX(0.86);transform-origin:0 0">1</div>
<div class="t" style="left:2.20px;top:340.10px;font-size:3.2px;color:#7e7e7e;transform:scaleX(0.86);transform-origin:0 0">0</div>
<div class="t" style="left:2.20px;top:342.80px;font-size:3.2px;color:#7e7e7e;transform:scaleX(0.86);transform-origin:0 0">5</div>
<div class="t" style="left:2.20px;top:345.50px;font-size:3.2px;color:#7e7e7e;transform:scaleX(0.86);transform-origin:0 0">0</div>
<div class="a" style="left:7.6px;top:14.2px;width:291px;height:336.6px;background:#282828"></div>
<div class="a" style="left:298.6px;top:8px;width:6.8px;height:342px;background:#4e4e4e"></div>
<div class="a" style="left:0;top:350.8px;width:305.4px;height:6.4px;background:#505050"></div>
<div class="t" style="left:6.60px;top:352.01px;font-size:3.95px;color:#cdcdcd;transform:scaleX(0.86);transform-origin:0 0">74%</div>
<svg class="a" style="left:18.6px;top:351.9px" width="4" height="3.6" viewBox="0 0 4 3.6"><rect x="0.3" y="0.9" width="2.6" height="2.4" fill="none" stroke="#d0d0d0" stroke-width="0.5"/><path d="M1.6 0.3 H3.7 V2.3" stroke="#d0d0d0" stroke-width="0.5" fill="none"/></svg>
<div class="t" style="left:40.80px;top:352.10px;font-size:4.19px;color:#c4c4c4;transform:scaleX(0.86);transform-origin:0 0">Doc: 2,33M/2,33M</div>
<svg class="a" style="left:85.6px;top:352.1px" width="2" height="3" viewBox="0 0 2 3"><path d="M0.3 0.3 L1.6 1.5 L0.3 2.7" stroke="#8c8c8c" stroke-width="0.5" fill="none"/></svg>
</div>
<!-- PIN -->
<div class="a" id="pin" style="left:93px;top:112.8px;width:229.8px;height:238px;overflow:hidden">
<div class="a" style="left:0.8px;top:0;width:229px;height:238px;background:#fff"></div>
<svg class="a" style="left:12.6px;top:2.4px" width="9" height="9" viewBox="0 0 9 9"><path d="M6.2 0.9 L8.1 2.8 L7.2 3.7 L5.3 1.8Z M4.8 2.3 L6.7 4.2 L2.9 8 L0.7 8.3 L1 6.1Z" fill="#a6a6a6"/></svg>
<svg class="a" style="left:31.4px;top:3px" width="8" height="8.4" viewBox="0 0 8 8.4"><path d="M1 4 V7.6 H7 V4" fill="none" stroke="#a6a6a6" stroke-width="0.9"/><path d="M4 5.6 V1.2 M2.4 2.6 L4 1 L5.6 2.6" fill="none" stroke="#a6a6a6" stroke-width="0.9"/></svg>
<svg class="a" style="left:50px;top:3px" width="8.4" height="7" viewBox="0 0 8.4 7"><path d="M0.8 3.6 L3 5.8 L7.6 1" fill="none" stroke="#a6a6a6" stroke-width="1.3"/></svg>
<svg class="a" style="left:70px;top:5.8px" width="9" height="2.4" viewBox="0 0 9 2.4"><circle cx="1.2" cy="1.2" r="0.9" fill="#a6a6a6"/><circle cx="4.4" cy="1.2" r="0.9" fill="#a6a6a6"/><circle cx="7.6" cy="1.2" r="0.9" fill="#a6a6a6"/></svg>
<div class="a" style="left:188.8px;top:-1px;width:39.4px;height:14.2px;background:#cf101e;border-radius:1.6px"></div>
<svg class="a" style="left:194.2px;top:3.4px" width="5.4" height="7.6" viewBox="0 0 5 7"><path d="M1.3 0.4 H3.7 V0.9 L3.3 1.2 V3 L4.3 3.9 V4.4 H2.8 L2.5 6.6 L2.2 4.4 H0.7 V3.9 L1.7 3 V1.2 L1.3 0.9Z" fill="#fff"/></svg>
<div class="t" style="left:200.80px;top:5.03px;font-size:5.4px;color:#fff;font-weight:bold">Bewaren</div>
<div class="a" style="left:21.6px;top:18px;width:194.4px;height:194px;border-radius:3px;overflow:hidden;background:#5a4e3c"><svg class="a" style="left:0;top:0" width="194.4" height="194" viewBox="114.6 130.8 194.4 194">
<defs>
<filter id="bl3" x="-5%" y="-5%" width="110%" height="110%"><feGaussianBlur stdDeviation="0.35"/></filter>
<filter id="bl" x="-5%" y="-5%" width="110%" height="110%"><feGaussianBlur stdDeviation="0.8"/></filter>
<linearGradient id="curt" x1="0" x2="1" y1="0" y2="0">
<stop offset="0" stop-color="#3e3026"/><stop offset="0.06" stop-color="#664628"/><stop offset="0.16" stop-color="#84603a"/><stop offset="0.28" stop-color="#644426"/><stop offset="0.4" stop-color="#806038"/><stop offset="0.52" stop-color="#947244"/><stop offset="0.66" stop-color="#66462a"/><stop offset="0.8" stop-color="#785434"/><stop offset="0.92" stop-color="#5e4228"/><stop offset="1" stop-color="#40341f"/></linearGradient>
<linearGradient id="curtd" x1="0" x2="0" y1="0" y2="1"><stop offset="0" stop-color="#000" stop-opacity="0.05"/><stop offset="0.5" stop-color="#000" stop-opacity="0.12"/><stop offset="1" stop-color="#1a0e06" stop-opacity="0.55"/></linearGradient>
<linearGradient id="lband" x1="0" x2="0" y1="0" y2="1"><stop offset="0" stop-color="#a49e92"/><stop offset="0.3" stop-color="#8e887c"/><stop offset="0.47" stop-color="#857d72"/><stop offset="0.52" stop-color="#d2cec6"/><stop offset="0.6" stop-color="#c4beb4"/><stop offset="0.66" stop-color="#4a382a"/><stop offset="1" stop-color="#3a2a20"/></linearGradient>
<linearGradient id="hairg" x1="0" x2="0" y1="0" y2="1"><stop offset="0" stop-color="#7e5e3e"/><stop offset="0.25" stop-color="#a88458"/><stop offset="0.55" stop-color="#cfa876"/><stop offset="1" stop-color="#dcb47c"/></linearGradient>
<pattern id="knit" width="3.2" height="2.8" patternUnits="userSpaceOnUse"><rect width="3.2" height="2.8" fill="#1d2436"/><rect x="0.2" y="0.3" width="1.3" height="0.8" fill="#c4cad8"/><rect x="1.8" y="1.7" width="1.1" height="0.7" fill="#7480a0"/></pattern>
</defs>
<g filter="url(#bl)">
<rect x="110" y="126" width="204" height="204" fill="#463e2e"/>
<!-- upper background mottling -->
<ellipse cx="205" cy="138" rx="24" ry="8" fill="#5e5642"/>
<ellipse cx="252" cy="142" rx="18" ry="9" fill="#7a6c52"/>
<ellipse cx="232" cy="152" rx="8" ry="10" fill="#38322a"/>
<ellipse cx="258" cy="170" rx="10" ry="30" fill="#3a3428"/>
<path d="M264 150 C268 170 264 210 270 256 L300 250 C298 210 302 180 298 152Z" fill="#5a5444"/>
<path d="M274 154 C279 180 276 206 281 244 L285 244 C283 206 285 180 282 154Z" fill="#6e6858"/>
<path d="M288 156 C292 176 290 204 294 232 L298 228 C296 204 298 176 294 154Z" fill="#777060"/>
<path d="M298 132 L312 132 L312 200 L302 212Z" fill="#3c3628"/>
<rect x="262" y="128" width="50" height="24" fill="#403a2c"/>
<ellipse cx="280" cy="140" rx="12" ry="5" fill="#524a3a"/>
<!-- left band and curtain -->
<rect x="127" y="128" width="54" height="140" fill="url(#curt)"/>
<rect x="127" y="128" width="54" height="140" fill="url(#curtd)"/>
<rect x="112" y="128" width="15.4" height="200" fill="url(#lband)"/>
<rect x="127" y="128" width="2.4" height="120" fill="#3a2e24"/>
<rect x="178" y="128" width="12" height="70" fill="#3e3424"/>
<!-- tree bottom right -->
<path d="M276 270 L312 252 L312 328 L270 328Z" fill="#39332a"/>
<path d="M292 272 C296 290 294 310 298 328 L306 328 C304 306 306 286 302 266Z" fill="#8a8474"/>
<path d="M281 280 C283 300 281 316 283 328 L287 328 C287 312 287 296 285 278Z" fill="#5e584a"/>
<!-- coat back/right arm -->
<path d="M236 236 C250 230 268 228 286 228 C296 214 304 200 312 192 L312 254 L276 272 L272 328 L236 328Z" fill="#9c7452"/>
<path d="M250 236 C262 250 268 262 270 282 L276 270 L300 258 C290 246 276 238 262 232Z" fill="#866242"/>
<path d="M262 232 C270 240 274 252 276 266" stroke="#6e4e34" stroke-width="1.4" fill="none"/>
<path d="M294 216 C300 206 306 198 312 192 L312 232 C306 228 298 224 294 216Z" fill="#bc946e"/>
<!-- coat left -->
<path d="M113 292 C118 276 128 262 140 254 C150 246 160 242 170 241 C178 240 186 242 192 245 L204 262 L214 328 L113 328Z" fill="#be9268"/>
<path d="M113 300 C130 288 150 284 170 290 L160 328 L113 328Z" fill="#a67c58"/>
<path d="M113 312 C128 304 146 302 162 306 L160 328 L113 328Z" fill="#9a7250"/>
<path d="M150 250 C160 270 166 290 158 328 L168 328 C174 296 170 270 158 248Z" fill="#94704e"/>
<path d="M186 270 C190 290 192 310 190 328 L204 328 L204 290Z" fill="#c49c72"/>
</g><g filter="url(#bl3)">
<!-- sweater -->
<path d="M199 243 L239 243 L243 328 L195 328 Z" fill="url(#knit)"/>
</g><g filter="url(#bl)">
<!-- coat lapel right -->
<path d="M236 250 C240 270 246 300 248 328 L272 328 L270 280 C262 262 250 250 240 244Z" fill="#aa805a"/>
<path d="M238 254 C243 276 248 304 250 328" stroke="#7c5a3c" stroke-width="1.2" fill="none"/>
<!-- neck -->
<path d="M205 224 L230 222 L230 244 L207 244Z" fill="#b88c72"/>
<!-- collar -->
<path d="M203 240 L214 238 L231 238 L232 249 L224 257 L214 248 L206 252Z" fill="#ecebea"/>
<!-- hair back right -->
<path d="M206 146 C228 146 242 160 246 184 C250 206 256 230 260 254 L236 254 C234 234 232 210 232 190 L214 160Z" fill="#94704a"/>
<path d="M238 196 C242 220 246 238 252 254 L243 254 C239 236 237 220 235 204Z" fill="#b8946a"/>
<path d="M233 176 C240 196 240 220 242 248" stroke="#6a4c30" stroke-width="1.6" fill="none"/>
<!-- face -->
<path d="M191.5 188 C192 174 200 166 212 166 C225 166 233.5 174 233 192 C233 208 231 222 224 232 C220 238 214 239 210 236 C201 230 193 214 191.5 200Z" fill="#d6ac92"/>
<ellipse cx="204" cy="210" rx="9" ry="11" fill="#deb69e"/>
<ellipse cx="226" cy="210" rx="5" ry="12" fill="#c4977c"/>
<path d="M208 232 C214 238 220 238 225 230 L224 240 L210 240Z" fill="#a87c64"/>
<!-- brows / eyes / lips -->
<path d="M192.6 189.8 C197 184.8 203 185 208.4 189.4 L208.4 192.8 C203 189.4 197 189.6 192.6 192.8Z" fill="#2c1d14"/>
<path d="M216 188.6 C221 183.4 228 183 234 187.4 L234 190.8 C228 187 222 187.8 216 192Z" fill="#2c1d14"/>
<ellipse cx="199.4" cy="196.2" rx="4.4" ry="2.6" fill="#221e24"/>
<ellipse cx="225" cy="194.4" rx="4.6" ry="2.7" fill="#221e24"/>
<circle cx="199.6" cy="196.4" r="1.3" fill="#9db2c6"/><circle cx="225" cy="194.6" r="1.3" fill="#9db2c6"/>
<path d="M195 199.6 C198 201 202 201 204.6 199.4 M220.4 197.8 C223.6 199.4 227.6 199.2 230.4 197.4" stroke="#b48a74" stroke-width="0.9" fill="none"/>
<path d="M207.6 222.6 C211 220.6 214 221.6 216.6 220.8 C219.6 220.4 222.6 221.4 225.4 222.8 C221 226 212 226.2 207.6 222.6Z" fill="#a6585a"/>
<path d="M212.6 197 L210.4 211 C211.6 213.4 215.4 213.8 217.6 212.4" stroke="#b08268" stroke-width="1.3" fill="none"/>
<!-- hair top / left -->
<path d="M183 198 C181 170 192 147 210 146 C224 146 233 154 238 172 C229 164 219 163 211 165.6 C200 170 193.6 184 192.6 204 C192.6 226 198 246 204 264 C208 278 211 290 209 300 L194 298 C190 272 183 250 181 228Z" fill="url(#hairg)"/>
<path d="M207 147 C206 154 207 160 210 166" stroke="#5e4228" stroke-width="1" fill="none"/>
<path d="M183 200 C182 220 185 244 191 268 L185 264 C179 244 177 222 179 204Z" fill="#8a6642"/>
<path d="M193 204 C193 228 198 248 204 266" stroke="#8e6a44" stroke-width="1.3" fill="none"/>
<path d="M187 214 C187 236 192 258 198 280" stroke="#e4c08c" stroke-width="1.4" fill="none"/>
<!-- owl -->
<path d="M136.6 228 C134.6 210 144 196 156 190 L153 181 L162 186 C168 184 174 184 178 186 L185 180 L183.6 190 C188.6 198 187 212 183 224 C181 238 175 247 166 249 L149 249 C140 244 137.6 236 136.6 228Z" fill="#6e655b"/>
<ellipse cx="168" cy="198" rx="11.4" ry="9" fill="#cfc7bd"/>
<path d="M153 181 L162 188 L168 193 L176 188 L185 180 L181 192 L168 197 L157 192Z" fill="#2e2722"/>
<path d="M157 196 C156 202 158 208 162 210 M180 196 C181 202 178 208 175 210" stroke="#2e2722" stroke-width="1.3" fill="none"/>
<circle cx="162.6" cy="197.4" r="2.1" fill="#7a3410"/><circle cx="174" cy="197.4" r="2.1" fill="#7a3410"/>
<circle cx="162.6" cy="197.4" r="0.9" fill="#120c08"/><circle cx="174" cy="197.4" r="0.9" fill="#120c08"/>
<path d="M167 199 L169.4 199 L168.2 203.6Z" fill="#2a2420"/>
<path d="M158 208 C162 215 171 215 176 208 C180 218 178 232 170 242 L158 242 C152 232 152 218 158 208Z" fill="#b4aca2"/>
<path d="M160 214 L161 222 M165 216 L165 226 M170 216 L170 228 M174 214 L173 224 M162 228 L163 238 M168 230 L168 240" stroke="#4a423a" stroke-width="1" fill="none"/>
<path d="M138.4 216 C143 206 149 202 154 200 C152 214 150 228 152 246 C145 240 136.4 228 138.4 216Z" fill="#4a423a"/>
<path d="M144 218 L150 208 M145 226 L151 216 M147 233 L151 226" stroke="#b8b0a6" stroke-width="0.9" fill="none"/>
<path d="M150 246 L153 252 M160 246 L161 252 M166 246 L168 251" stroke="#3a322c" stroke-width="1.2"/>
<!-- bag handle -->
<path d="M186 328 C190 306 204 294 220 296 C236 298 246 312 247 328" fill="none" stroke="#42261e" stroke-width="3.6"/>
<path d="M189 328 C193 309 205 298.6 220 299.6" fill="none" stroke="#7a5040" stroke-width="0.8"/>
</g>
</svg>
</div>
<svg class="a" style="left:200.6px;top:23.8px" width="9.6" height="9.6" viewBox="0 0 9.6 9.6"><rect x="0" y="0" width="9.6" height="9.6" rx="1.6" fill="#2a2620" fill-opacity="0.25"/><path d="M1.6 3.4 V1.6 H3.4 M6.2 1.6 H8 V3.4 M8 6.2 V8 H6.2 M3.4 8 H1.6 V6.2" stroke="#fff" stroke-width="0.8" fill="none"/><circle cx="4.6" cy="4.6" r="1.3" stroke="#fff" stroke-width="0.7" fill="none"/><path d="M5.6 5.6 L6.6 6.6" stroke="#fff" stroke-width="0.7"/></svg>
<div class="a" style="left:12.4px;top:220.8px;width:22.4px;height:22.4px;border-radius:50%;background:#b3b3b3"></div>
<div class="t" style="left:18.40px;top:227.04px;font-size:11.0px;color:#fff;font-weight:bold">W</div>
<div class="t" style="left:38.60px;top:226.96px;font-size:5.2px;color:#555">Afkomstig van</div>
<div class="t" style="left:38.60px;top:233.33px;font-size:5.1px;color:#333;font-weight:bold">weheartit.com</div>
<div class="a" style="left:189px;top:225.4px;width:39px;height:16px;background:#ebebeb;border-radius:1.6px"></div>
<div class="t" style="left:194.60px;top:229.56px;font-size:6.3px;color:#2e2e2e">Bezoeken</div>
</div>
<!-- WINDOW 2 -->
<div class="a" id="w2" style="left:392px;top:66.6px;width:317.4px;height:359.4px;background:#535353">
<div class="a" style="left:0;top:0;width:317.4px;height:8.4px;background:#565656"></div>
<svg class="a" style="left:1.4px;top:1.4px" width="6.2" height="6.2" viewBox="0 0 6.2 6.2"><rect x="0.2" y="0.2" width="5.8" height="5.8" fill="#0a2038" stroke="#2f5f96" stroke-width="0.4"/><text x="1" y="4.5" font-family="Liberation Sans,sans-serif" font-weight="bold" font-size="3.6" fill="#8cc0f8">Ps</text></svg>
<div class="t" style="left:8.80px;top:2.90px;font-size:4.48px;color:#f2f2f2;font-weight:bold;transform:scaleX(0.86);transform-origin:0 0">Untitled-3.psd @ 21,8% (Layer 8, RGB/8) *</div>
<svg class="a" style="left:282.7px;top:4.5px" width="3.6" height="1.2" viewBox="0 0 3.6 1.2"><rect x="0" y="0.1" width="3.4" height="0.9" fill="#ececec"/></svg>
<svg class="a" style="left:292.00px;top:2.40px" width="4" height="3" viewBox="0 0 4 3"><rect x="0.5" y="0.5" width="3" height="2" fill="none" stroke="#ececec" stroke-width="0.8"/></svg>
<svg class="a" style="left:305.3px;top:1.7px" width="3.8" height="3.8" viewBox="0 0 3.8 3.8"><path d="M0.3 0.3 L3.5 3.5 M3.5 0.3 L0.3 3.5" stroke="#ececec" stroke-width="0.7" fill="none"/></svg>
<div class="a" style="left:0.6px;top:8.4px;width:310.6px;height:6px;background:#4c4c4c"></div>
<div class="a" style="left:0.6px;top:8.4px;width:7.2px;height:344px;background:#4c4c4c"></div>
<div class="a" style="left:8.4px;top:12.4px;width:302.6px;height:2.2px;background:repeating-linear-gradient(to right,rgba(255,255,255,0.12) 0,rgba(255,255,255,0.12) 0.6px,transparent 0.6px,transparent 3.09px)"></div>
<div class="a" style="left:5.8px;top:14.8px;width:2.2px;height:337.2px;background:repeating-linear-gradient(to bottom,rgba(255,255,255,0.12) 0,rgba(255,255,255,0.12) 0.6px,transparent 0.6px,transparent 3.09px)"></div>
<div class="t" style="left:16.90px;top:11.15px;font-size:3.2px;color:#bcbcbc;transform:scaleX(0.86);transform-origin:0 0">400</div>
<div class="t" style="left:32.35px;top:11.15px;font-size:3.2px;color:#bcbcbc;transform:scaleX(0.86);transform-origin:0 0">200</div>
<div class="t" style="left:47.80px;top:11.15px;font-size:3.2px;color:#bcbcbc;transform:scaleX(0.86);transform-origin:0 0">0</div>
<div class="t" style="left:63.25px;top:11.15px;font-size:3.2px;color:#bcbcbc;transform:scaleX(0.86);transform-origin:0 0">200</div>
<div class="t" style="left:78.70px;top:11.15px;font-size:3.2px;color:#bcbcbc;transform:scaleX(0.86);transform-origin:0 0">400</div>
<div class="t" style="left:94.15px;top:11.15px;font-size:3.2px;color:#bcbcbc;transform:scaleX(0.86);transform-origin:0 0">600</div>
<div class="t" style="left:109.60px;top:11.15px;font-size:3.2px;color:#bcbcbc;transform:scaleX(0.86);transform-origin:0 0">800</div>
<div class="t" style="left:125.05px;top:11.15px;font-size:3.2px;color:#bcbcbc;transform:scaleX(0.86);transform-origin:0 0">1000</div>
<div class="t" style="left:140.50px;top:11.15px;font-size:3.2px;color:#bcbcbc;transform:scaleX(0.86);transform-origin:0 0">1200</div>
<div class="t" style="left:155.95px;top:11.15px;font-size:3.2px;color:#bcbcbc;transform:scaleX(0.86);transform-origin:0 0">1400</div>
<div class="t" style="left:171.40px;top:11.15px;font-size:3.2px;color:#bcbcbc;transform:scaleX(0.86);transform-origin:0 0">1600</div>
<div class="t" style="left:186.85px;top:11.15px;font-size:3.2px;color:#bcbcbc;transform:scaleX(0.86);transform-origin:0 0">1800</div>
<div class="t" style="left:202.30px;top:11.15px;font-size:3.2px;color:#bcbcbc;transform:scaleX(0.86);transform-origin:0 0">2000</div>
<div class="t" style="left:217.75px;top:11.15px;font-size:3.2px;color:#bcbcbc;transform:scaleX(0.86);transform-origin:0 0">2200</div>
<div class="t" style="left:233.20px;top:11.15px;font-size:3.2px;color:#bcbcbc;transform:scaleX(0.86);transform-origin:0 0">2400</div>
<div class="t" style="left:248.65px;top:11.15px;font-size:3.2px;color:#bcbcbc;transform:scaleX(0.86);transform-origin:0 0">2600</div>
<div class="t" style="left:264.10px;top:11.15px;font-size:3.2px;color:#bcbcbc;transform:scaleX(0.86);transform-origin:0 0">2800</div>
<div class="t" style="left:279.55px;top:11.15px;font-size:3.2px;color:#bcbcbc;transform:scaleX(0.86);transform-origin:0 0">3000</div>
<div class="t" style="left:295.00px;top:11.15px;font-size:3.2px;color:#bcbcbc;transform:scaleX(0.86);transform-origin:0 0">3200</div>
<div class="t" style="left:2.60px;top:17.70px;font-size:3.2px;color:#bcbcbc;transform:scaleX(0.86);transform-origin:0 0">0</div>
<div class="t" style="left:2.60px;top:27.75px;font-size:3.2px;color:#bcbcbc;transform:scaleX(0.86);transform-origin:0 0">0</div>
<div class="t" style="left:2.60px;top:43.20px;font-size:3.2px;color:#bcbcbc;transform:scaleX(0.86);transform-origin:0 0">2</div>
<div class="t" style="left:2.60px;top:45.90px;font-size:3.2px;color:#bcbcbc;transform:scaleX(0.86);transform-origin:0 0">0</div>
<div class="t" style="left:2.60px;top:48.60px;font-size:3.2px;color:#bcbcbc;transform:scaleX(0.86);transform-origin:0 0">0</div>
<div class="t" style="left:2.60px;top:58.65px;font-size:3.2px;color:#bcbcbc;transform:scaleX(0.86);transform-origin:0 0">4</div>
<div class="t" style="left:2.60px;top:61.35px;font-size:3.2px;color:#bcbcbc;transform:scaleX(0.86);transform-origin:0 0">0</div>
<div class="t" style="left:2.60px;top:64.05px;font-size:3.2px;color:#bcbcbc;transform:scaleX(0.86);transform-origin:0 0">0</div>
<div class="t" style="left:2.60px;top:74.10px;font-size:3.2px;color:#bcbcbc;transform:scaleX(0.86);transform-origin:0 0">6</div>
<div class="t" style="left:2.60px;top:76.80px;font-size:3.2px;color:#bcbcbc;transform:scaleX(0.86);transform-origin:0 0">0</div>
<div class="t" style="left:2.60px;top:79.50px;font-size:3.2px;color:#bcbcbc;transform:scaleX(0.86);transform-origin:0 0">0</div>
<div class="t" style="left:2.60px;top:89.55px;font-size:3.2px;color:#bcbcbc;transform:scaleX(0.86);transform-origin:0 0">8</div>
<div class="t" style="left:2.60px;top:92.25px;font-size:3.2px;color:#bcbcbc;transform:scaleX(0.86);transform-origin:0 0">0</div>
<div class="t" style="left:2.60px;top:94.95px;font-size:3.2px;color:#bcbcbc;transform:scaleX(0.86);transform-origin:0 0">0</div>
<div class="t" style="left:2.60px;top:105.00px;font-size:3.2px;color:#bcbcbc;transform:scaleX(0.86);transform-origin:0 0">1</div>
<div class="t" style="left:2.60px;top:107.70px;font-size:3.2px;color:#bcbcbc;transform:scaleX(0.86);transform-origin:0 0">0</div>
<div class="t" style="left:2.60px;top:110.40px;font-size:3.2px;color:#bcbcbc;transform:scaleX(0.86);transform-origin:0 0">0</div>
<div class="t" style="left:2.60px;top:113.10px;font-size:3.2px;color:#bcbcbc;transform:scaleX(0.86);transform-origin:0 0">0</div>
<div class="t" style="left:2.60px;top:120.45px;font-size:3.2px;color:#bcbcbc;transform:scaleX(0.86);transform-origin:0 0">1</div>
<div class="t" style="left:2.60px;top:123.15px;font-size:3.2px;color:#bcbcbc;transform:scaleX(0.86);transform-origin:0 0">2</div>
<div class="t" style="left:2.60px;top:125.85px;font-size:3.2px;color:#bcbcbc;transform:scaleX(0.86);transform-origin:0 0">0</div>
<div class="t" style="left:2.60px;top:128.55px;font-size:3.2px;color:#bcbcbc;transform:scaleX(0.86);transform-origin:0 0">0</div>
<div class="t" style="left:2.60px;top:135.90px;font-size:3.2px;color:#bcbcbc;transform:scaleX(0.86);transform-origin:0 0">1</div>
<div class="t" style="left:2.60px;top:138.60px;font-size:3.2px;color:#bcbcbc;transform:scaleX(0.86);transform-origin:0 0">4</div>
<div class="t" style="left:2.60px;top:141.30px;font-size:3.2px;color:#bcbcbc;transform:scaleX(0.86);transform-origin:0 0">0</div>
<div class="t" style="left:2.60px;top:144.00px;font-size:3.2px;color:#bcbcbc;transform:scaleX(0.86);transform-origin:0 0">0</div>
<div class="t" style="left:2.60px;top:151.35px;font-size:3.2px;color:#bcbcbc;transform:scaleX(0.86);transform-origin:0 0">1</div>
<div class="t" style="left:2.60px;top:154.05px;font-size:3.2px;color:#bcbcbc;transform:scaleX(0.86);transform-origin:0 0">6</div>
<div class="t" style="left:2.60px;top:156.75px;font-size:3.2px;color:#bcbcbc;transform:scaleX(0.86);transform-origin:0 0">0</div>
<div class="t" style="left:2.60px;top:159.45px;font-size:3.2px;color:#bcbcbc;transform:scaleX(0.86);transform-origin:0 0">0</div>
<div class="t" style="left:2.60px;top:166.80px;font-size:3.2px;color:#bcbcbc;transform:scaleX(0.86);transform-origin:0 0">1</div>
<div class="t" style="left:2.60px;top:169.50px;font-size:3.2px;color:#bcbcbc;transform:scaleX(0.86);transform-origin:0 0">8</div>
<div class="t" style="left:2.60px;top:172.20px;font-size:3.2px;color:#bcbcbc;transform:scaleX(0.86);transform-origin:0 0">0</div>
<div class="t" style="left:2.60px;top:174.90px;font-size:3.2px;color:#bcbcbc;transform:scaleX(0.86);transform-origin:0 0">0</div>
<div class="t" style="left:2.60px;top:182.25px;font-size:3.2px;color:#bcbcbc;transform:scaleX(0.86);transform-origin:0 0">2</div>
<div class="t" style="left:2.60px;top:184.95px;font-size:3.2px;color:#bcbcbc;transform:scaleX(0.86);transform-origin:0 0">0</div>
<div class="t" style="left:2.60px;top:187.65px;font-size:3.2px;color:#bcbcbc;transform:scaleX(0.86);transform-origin:0 0">0</div>
<div class="t" style="left:2.60px;top:190.35px;font-size:3.2px;color:#bcbcbc;transform:scaleX(0.86);transform-origin:0 0">0</div>
<div class="t" style="left:2.60px;top:197.70px;font-size:3.2px;color:#bcbcbc;transform:scaleX(0.86);transform-origin:0 0">2</div>
<div class="t" style="left:2.60px;top:200.40px;font-size:3.2px;color:#bcbcbc;transform:scaleX(0.86);transform-origin:0 0">2</div>
<div class="t" style="left:2.60px;top:203.10px;font-size:3.2px;color:#bcbcbc;transform:scaleX(0.86);transform-origin:0 0">0</div>
<div class="t" style="left:2.60px;top:205.80px;font-size:3.2px;color:#bcbcbc;transform:scaleX(0.86);transform-origin:0 0">0</div>
<div class="t" style="left:2.60px;top:213.15px;font-size:3.2px;color:#bcbcbc;transform:scaleX(0.86);transform-origin:0 0">2</div>
<div class="t" style="left:2.60px;top:215.85px;font-size:3.2px;color:#bcbcbc;transform:scaleX(0.86);transform-origin:0 0">4</div>
<div class="t" style="left:2.60px;top:218.55px;font-size:3.2px;color:#bcbcbc;transform:scaleX(0.86);transform-origin:0 0">0</div>
<div class="t" style="left:2.60px;top:221.25px;font-size:3.2px;color:#bcbcbc;transform:scaleX(0.86);transform-origin:0 0">0</div>
<div class="t" style="left:2.60px;top:228.60px;font-size:3.2px;color:#bcbcbc;transform:scaleX(0.86);transform-origin:0 0">2</div>
<div class="t" style="left:2.60px;top:231.30px;font-size:3.2px;color:#bcbcbc;transform:scaleX(0.86);transform-origin:0 0">6</div>
<div class="t" style="left:2.60px;top:234.00px;font-size:3.2px;color:#bcbcbc;transform:scaleX(0.86);transform-origin:0 0">0</div>
<div class="t" style="left:2.60px;top:236.70px;font-size:3.2px;color:#bcbcbc;transform:scaleX(0.86);transform-origin:0 0">0</div>
<div class="t" style="left:2.60px;top:244.05px;font-size:3.2px;color:#bcbcbc;transform:scaleX(0.86);transform-origin:0 0">2</div>
<div class="t" style="left:2.60px;top:246.75px;font-size:3.2px;color:#bcbcbc;transform:scaleX(0.86);transform-origin:0 0">8</div>
<div class="t" style="left:2.60px;top:249.45px;font-size:3.2px;color:#bcbcbc;transform:scaleX(0.86);transform-origin:0 0">0</div>
<div class="t" style="left:2.60px;top:252.15px;font-size:3.2px;color:#bcbcbc;transform:scaleX(0.86);transform-origin:0 0">0</div>
<div class="t" style="left:2.60px;top:259.50px;font-size:3.2px;color:#bcbcbc;transform:scaleX(0.86);transform-origin:0 0">3</div>
<div class="t" style="left:2.60px;top:262.20px;font-size:3.2px;color:#bcbcbc;transform:scaleX(0.86);transform-origin:0 0">0</div>
<div class="t" style="left:2.60px;top:264.90px;font-size:3.2px;color:#bcbcbc;transform:scaleX(0.86);transform-origin:0 0">0</div>
<div class="t" style="left:2.60px;top:267.60px;font-size:3.2px;color:#bcbcbc;transform:scaleX(0.86);transform-origin:0 0">0</div>
<div class="t" style="left:2.60px;top:274.95px;font-size:3.2px;color:#bcbcbc;transform:scaleX(0.86);transform-origin:0 0">3</div>
<div class="t" style="left:2.60px;top:277.65px;font-size:3.2px;color:#bcbcbc;transform:scaleX(0.86);transform-origin:0 0">2</div>
<div class="t" style="left:2.60px;top:280.35px;font-size:3.2px;color:#bcbcbc;transform:scaleX(0.86);transform-origin:0 0">0</div>
<div class="t" style="left:2.60px;top:283.05px;font-size:3.2px;color:#bcbcbc;transform:scaleX(0.86);transform-origin:0 0">0</div>
<div class="t" style="left:2.60px;top:290.40px;font-size:3.2px;color:#bcbcbc;transform:scaleX(0.86);transform-origin:0 0">3</div>
<div class="t" style="left:2.60px;top:293.10px;font-size:3.2px;color:#bcbcbc;transform:scaleX(0.86);transform-origin:0 0">4</div>
<div class="t" style="left:2.60px;top:295.80px;font-size:3.2px;color:#bcbcbc;transform:scaleX(0.86);transform-origin:0 0">0</div>
<div class="t" style="left:2.60px;top:298.50px;font-size:3.2px;color:#bcbcbc;transform:scaleX(0.86);transform-origin:0 0">0</div>
<div class="t" style="left:2.60px;top:305.85px;font-size:3.2px;color:#bcbcbc;transform:scaleX(0.86);transform-origin:0 0">3</div>
<div class="t" style="left:2.60px;top:308.55px;font-size:3.2px;color:#bcbcbc;transform:scaleX(0.86);transform-origin:0 0">6</div>
<div class="t" style="left:2.60px;top:311.25px;font-size:3.2px;color:#bcbcbc;transform:scaleX(0.86);transform-origin:0 0">0</div>
<div class="t" style="left:2.60px;top:313.95px;font-size:3.2px;color:#bcbcbc;transform:scaleX(0.86);transform-origin:0 0">0</div>
<div class="t" style="left:2.60px;top:321.30px;font-size:3.2px;color:#bcbcbc;transform:scaleX(0.86);transform-origin:0 0">3</div>
<div class="t" style="left:2.60px;top:324.00px;font-size:3.2px;color:#bcbcbc;transform:scaleX(0.86);transform-origin:0 0">8</div>
<div class="t" style="left:2.60px;top:326.70px;font-size:3.2px;color:#bcbcbc;transform:scaleX(0.86);transform-origin:0 0">0</div>
<div class="t" style="left:2.60px;top:329.40px;font-size:3.2px;color:#bcbcbc;transform:scaleX(0.86);transform-origin:0 0">0</div>
<div class="t" style="left:2.60px;top:336.75px;font-size:3.2px;color:#bcbcbc;transform:scaleX(0.86);transform-origin:0 0">4</div>
<div class="t" style="left:2.60px;top:339.45px;font-size:3.2px;color:#bcbcbc;transform:scaleX(0.86);transform-origin:0 0">0</div>
<div class="t" style="left:2.60px;top:342.15px;font-size:3.2px;color:#bcbcbc;transform:scaleX(0.86);transform-origin:0 0">0</div>
<div class="t" style="left:2.60px;top:344.85px;font-size:3.2px;color:#bcbcbc;transform:scaleX(0.86);transform-origin:0 0">0</div>
<div class="a" style="left:7.8px;top:14.4px;width:303.4px;height:337.8px;background:#282828"></div>
<div class="a" style="left:45.8px;top:25.2px;width:226.2px;height:316px;background:#c66446"></div>
<div class="a" style="left:311.2px;top:8.4px;width:6.2px;height:344px;background:#4e4e4e"></div>
<div class="a" style="left:0;top:352.2px;width:317.4px;height:7.2px;background:#505050"></div>
<div class="t" style="left:4.00px;top:353.56px;font-size:4.07px;color:#e0e0e0;transform:scaleX(0.86);transform-origin:0 0">21,84%</div>
<svg class="a" style="left:19.4px;top:353.6px" width="4" height="3.6" viewBox="0 0 4 3.6"><rect x="0.3" y="0.9" width="2.6" height="2.4" fill="none" stroke="#d8d8d8" stroke-width="0.5"/><path d="M1.6 0.3 H3.7 V2.3" stroke="#d8d8d8" stroke-width="0.5" fill="none"/></svg>
<div class="t" style="left:40.30px;top:353.64px;font-size:4.3px;color:#c8c8c8;transform:scaleX(0.86);transform-origin:0 0">Doc: 24,9M/24,9M</div>
<svg class="a" style="left:86px;top:353.8px" width="2" height="3" viewBox="0 0 2 3"><path d="M0.3 0.3 L1.6 1.5 L0.3 2.7" stroke="#b8b8b8" stroke-width="0.5" fill="none"/></svg>
</div>
<!-- RIGHT PANELS -->
<div class="a" style="left:777.3px;top:32.6px;width:115.7px;height:4.8px;background:#484848"></div>
<div class="a" id="strip" style="left:777.3px;top:32.6px;width:13.6px;height:143.4px;background:#535353">
<div class="a" style="left:0;top:0;width:13.6px;height:4.8px;background:#484848"></div>
<svg class="a" style="left:8.2px;top:1.3px" width="3.4" height="2.2" viewBox="0 0 3.4 2.2"><path d="M0.3 0.2 L1.2 1.1 L0.3 2 M1.9 0.2 L2.8 1.1 L1.9 2" stroke="#c8c8c8" stroke-width="0.45" fill="none"/></svg>
<svg class="a" style="left:2.9px;top:8.2px" width="8" height="8" viewBox="0 0 8.8 8.8"><path d="M1.6 1 H3.4 V7.4 H1.6Z M4.2 1.8 C6.4 2 7.2 3.4 6.4 5 L4.8 4.4 C5.4 3.6 5 3 4.2 3Z" fill="#d6d6d6"/></svg>
<svg class="a" style="left:2.9px;top:22.8px" width="8" height="8" viewBox="0 0 8.8 8.8"><circle cx="5" cy="3" r="1.7" fill="#d6d6d6"/><path d="M2 7.6 C2 5.4 3.4 4.8 5 4.8 C6.6 4.8 8 5.4 8 7.6Z" fill="#d6d6d6"/><rect x="0.6" y="1.4" width="2" height="2" fill="#d6d6d6"/></svg>
<svg class="a" style="left:2.9px;top:37.8px" width="8" height="8" viewBox="0 0 8.8 8.8"><path d="M1.6 1.4 L7 7 M7 1.4 L1.6 7" stroke="#d6d6d6" stroke-width="1"/><circle cx="1.8" cy="7" r="1" fill="#d6d6d6"/><circle cx="7" cy="7" r="1" fill="#d6d6d6"/></svg>
<svg class="a" style="left:2.9px;top:51.8px" width="8" height="8" viewBox="0 0 8.8 8.8"><ellipse cx="4.4" cy="4.4" rx="3.6" ry="2.6" fill="#d6d6d6"/><ellipse cx="3.6" cy="4.4" rx="1.6" ry="1.2" fill="#777"/></svg>
<svg class="a" style="left:2.9px;top:67.0px" width="8" height="8" viewBox="0 0 8.8 8.8"><rect x="1" y="1" width="3.4" height="3.4" fill="none" stroke="#d6d6d6" stroke-width="0.7"/><rect x="4.4" y="4.4" width="3.4" height="3.4" fill="none" stroke="#d6d6d6" stroke-width="0.7"/><path d="M2.6 4.6 V6.2 H4.2" stroke="#d6d6d6" stroke-width="0.6" fill="none"/></svg>
<svg class="a" style="left:2.9px;top:80.4px" width="8" height="8" viewBox="0 0 8.8 8.8"><circle cx="4.4" cy="4.4" r="2.8" fill="none" stroke="#d6d6d6" stroke-width="0.8"/><path d="M4.4 1.6 A2.8 2.8 0 0 1 4.4 7.2Z" fill="#d6d6d6"/></svg>
<svg class="a" style="left:2.9px;top:90.2px" width="8" height="8" viewBox="0 0 8.8 8.8"><rect x="1.2" y="1.6" width="6.4" height="5.6" fill="none" stroke="#d6d6d6" stroke-width="0.8"/><path d="M2 6.4 L4 3.6 L5.2 5.2 L6 4.4 L7 6.4Z" fill="#d6d6d6"/><path d="M1 1 L3 1 L1 3Z" fill="#d6d6d6"/></svg>
<svg class="a" style="left:2.9px;top:104.4px" width="8" height="8" viewBox="0 0 8.8 8.8"><path d="M0.8 2.6 H8 M0.8 6 H8" stroke="#d6d6d6" stroke-width="0.9"/><rect x="5" y="1.4" width="1.6" height="2.4" fill="#d6d6d6"/><rect x="2" y="4.8" width="1.6" height="2.4" fill="#d6d6d6"/></svg>
<svg class="a" style="left:2.9px;top:118.4px" width="8" height="8" viewBox="0 0 8.8 8.8"><rect x="3" y="4" width="3" height="4" fill="#d6d6d6"/><path d="M4.5 4 V1.2 M2.6 2 L4.5 3.4 L6.4 2" stroke="#d6d6d6" stroke-width="0.8" fill="none"/></svg>
<svg class="a" style="left:2.9px;top:132.2px" width="8" height="8" viewBox="0 0 8.8 8.8"><rect x="1.4" y="1.4" width="6.2" height="6.2" fill="#d6d6d6"/><rect x="2.4" y="3.8" width="4.2" height="1" fill="#535353"/><circle cx="3" cy="2.6" r="0.6" fill="#535353"/></svg>
<div class="a" style="left:1px;top:19.4px;width:11.6px;height:0.5px;background:#4d4d4d"></div>
<div class="a" style="left:1px;top:34.2px;width:11.6px;height:0.5px;background:#4d4d4d"></div>
<div class="a" style="left:1px;top:48.8px;width:11.6px;height:0.5px;background:#4d4d4d"></div>
<div class="a" style="left:1px;top:63.4px;width:11.6px;height:0.5px;background:#4d4d4d"></div>
<div class="a" style="left:1px;top:77.8px;width:11.6px;height:0.5px;background:#4d4d4d"></div>
<div class="a" style="left:1px;top:101.4px;width:11.6px;height:0.5px;background:#4d4d4d"></div>
<div class="a" style="left:1px;top:115.4px;width:11.6px;height:0.5px;background:#4d4d4d"></div>
<div class="a" style="left:1px;top:129.4px;width:11.6px;height:0.5px;background:#4d4d4d"></div>
</div>
<svg class="a" style="left:881.6px;top:33.8px" width="3.4" height="2.2" viewBox="0 0 3.4 2.2"><path d="M1.2 0.2 L0.3 1.1 L1.2 2 M2.8 0.2 L1.9 1.1 L2.8 2" stroke="#c8c8c8" stroke-width="0.45" fill="none"/></svg>
<svg class="a" style="left:888.4px;top:33.8px" width="2.4" height="2.4" viewBox="0 0 2.4 2.4"><path d="M0.2 0.2 L2.2 2.2 M2.2 0.2 L0.2 2.2" stroke="#d8d8d8" stroke-width="0.5"/></svg>
<div class="a" id="nav" style="left:791.5px;top:37.4px;width:101.5px;height:99.9px;background:#535353">
<div class="a" style="left:0;top:0;width:101.5px;height:9.4px;background:#424242"></div>
<div class="a" style="left:0;top:0;width:22.2px;height:9.6px;background:#535353"></div>
<div class="t" style="left:3.20px;top:3.48px;font-size:4.13px;color:#f0f0f0;font-weight:bold;transform:scaleX(0.86);transform-origin:0 0">Navigator</div>
<div class="t" style="left:25.80px;top:3.54px;font-size:4.3px;color:#a4a4a4;transform:scaleX(0.86);transform-origin:0 0">Swatches</div>
<svg class="a" style="left:95.2px;top:3.4px" width="4" height="3.2" viewBox="0 0 4 3.2"><path d="M0 0.4 H4 M0 1.6 H4 M0 2.8 H4" stroke="#c4c4c4" stroke-width="0.55"/></svg>
<div class="a" style="left:22.3px;top:10.6px;width:56px;height:79.5px;background:#c66446"></div>
<div class="t" style="left:1.20px;top:94.46px;font-size:4.07px;color:#d8d8d8;transform:scaleX(0.86);transform-origin:0 0">21,84%</div>
<svg class="a" style="left:22.4px;top:94.6px" width="4" height="2.6" viewBox="0 0 4 2.6"><path d="M0 2.6 L1.4 0.8 L2.2 1.6 L2.8 1.2 L4 2.6Z" fill="#d8d8d8"/></svg>
<div class="a" style="left:31.2px;top:95.6px;width:52.4px;height:0.6px;background:#8a8a8a"></div>
<svg class="a" style="left:49.6px;top:95.8px" width="3.8" height="3" viewBox="0 0 3.8 3"><path d="M1.9 0 L3.8 3 H0Z" fill="#f0f0f0"/></svg>
<svg class="a" style="left:86.6px;top:93.4px" width="6.4" height="4" viewBox="0 0 6.4 4"><path d="M0 4 L2.2 1 L3.4 2.4 L4.4 1.6 L6.4 4Z" fill="#e0e0e0"/></svg>
</div>
<div class="a" id="layers" style="left:791.5px;top:138.2px;width:101.5px;height:215.2px;background:#535353">
<div class="a" style="left:0;top:0;width:101.5px;height:9.1px;background:#424242"></div>
<div class="a" style="left:0;top:0;width:16.3px;height:9.3px;background:#535353"></div>
<div class="t" style="left:3.30px;top:3.44px;font-size:4.3px;color:#f0f0f0;font-weight:bold;transform:scaleX(0.86);transform-origin:0 0">Layers</div>
<div class="t" style="left:19.40px;top:3.44px;font-size:4.3px;color:#a4a4a4;transform:scaleX(0.86);transform-origin:0 0">Paths</div>
<svg class="a" style="left:94.8px;top:3.2px" width="4" height="3.2" viewBox="0 0 4 3.2"><path d="M0 0.4 H4 M0 1.6 H4 M0 2.8 H4" stroke="#c4c4c4" stroke-width="0.55"/></svg>
<div class="a" style="left:1.9px;top:13.3px;width:30.6px;height:5.9px;background:#454545;border-radius:0.8px"></div>
<svg class="a" style="left:3.4px;top:14.4px" width="3.6" height="3.6" viewBox="0 0 3.6 3.6"><circle cx="2.2" cy="1.4" r="1.1" fill="none" stroke="#e0e0e0" stroke-width="0.5"/><path d="M1.4 2.2 L0.3 3.3" stroke="#e0e0e0" stroke-width="0.6"/></svg>
<div class="t" style="left:8.40px;top:14.80px;font-size:4.19px;color:#e4e4e4;transform:scaleX(0.86);transform-origin:0 0">Kind</div>
<svg class="a" style="left:28.6px;top:15.6px" width="2.4" height="1.6" viewBox="0 0 2.4 1.6"><path d="M0.2 0.2 L1.2 1.3 L2.2 0.2" stroke="#b8b8b8" stroke-width="0.45" fill="none"/></svg>
<svg class="a" style="left:36.1px;top:13.9px" width="4.8" height="4.8" viewBox="0 0 6 6"><rect x="0.6" y="1" width="4.8" height="4" fill="none" stroke="#e0e0e0" stroke-width="0.7"/><path d="M1 4.6 L2.4 3 L3.4 4 L5 4.6Z" fill="#e0e0e0"/></svg>
<svg class="a" style="left:44.9px;top:13.9px" width="4.8" height="4.8" viewBox="0 0 6 6"><circle cx="3" cy="3" r="2.2" fill="none" stroke="#e0e0e0" stroke-width="0.7"/><path d="M3 0.8 A2.2 2.2 0 0 1 3 5.2Z" fill="#e0e0e0"/></svg>
<svg class="a" style="left:53.1px;top:13.9px" width="4.8" height="4.8" viewBox="0 0 6 6"><path d="M0.8 1 H5.2 V2.2 H4.6 V1.8 H3.5 V4.6 H4.2 V5.2 H1.8 V4.6 H2.5 V1.8 H1.4 V2.2 H0.8Z" fill="#e0e0e0"/></svg>
<svg class="a" style="left:61.3px;top:13.9px" width="4.8" height="4.8" viewBox="0 0 6 6"><rect x="1.2" y="1.2" width="3.6" height="3.6" fill="none" stroke="#e0e0e0" stroke-width="0.6"/><rect x="0.4" y="0.4" width="1.5" height="1.5" fill="#e0e0e0"/><rect x="4.1" y="0.4" width="1.5" height="1.5" fill="#e0e0e0"/><rect x="0.4" y="4.1" width="1.5" height="1.5" fill="#e0e0e0"/><rect x="4.1" y="4.1" width="1.5" height="1.5" fill="#e0e0e0"/></svg>
<svg class="a" style="left:69.7px;top:13.9px" width="4.8" height="4.8" viewBox="0 0 6 6"><rect x="1" y="2.8" width="3.6" height="2.8" fill="#e0e0e0"/><path d="M1.8 2.8 V1.8 A1 1 0 0 1 3.8 1.8 V2.8" fill="none" stroke="#e0e0e0" stroke-width="0.6"/><rect x="3.6" y="0.6" width="2" height="1.8" fill="#e0e0e0"/></svg>
<svg class="a" style="left:78.6px;top:12.6px" width="4" height="4" viewBox="0 0 4 4"><circle cx="2" cy="2" r="1.5" fill="#ececec"/></svg>
<div class="a" style="left:1.9px;top:22.4px;width:44px;height:6.2px;background:#4d4d4d;border-radius:0.8px"></div>
<div class="t" style="left:4.00px;top:24.06px;font-size:4.07px;color:#787878;transform:scaleX(0.86);transform-origin:0 0">Normal</div>
<div class="t" style="left:49.50px;top:24.06px;font-size:4.07px;color:#808080;transform:scaleX(0.86);transform-origin:0 0">Opacity:</div>
<div class="t" style="left:65.50px;top:24.06px;font-size:4.07px;color:#6e6e6e;transform:scaleX(0.86);transform-origin:0 0">100%</div>
<div class="t" style="left:2.40px;top:33.66px;font-size:4.07px;color:#6e6e6e;transform:scaleX(0.86);transform-origin:0 0">Lock:</div>
<svg class="a" style="left:13.4px;top:33.1px" width="4.2" height="4.2" viewBox="0 0 5 5"><rect x="0.8" y="0.8" width="3.4" height="3.4" fill="none" stroke="#8c8c8c" stroke-width="0.6"/><path d="M0.8 2.5 H4.2 M2.5 0.8 V4.2" stroke="#8c8c8c" stroke-width="0.4"/></svg>
<svg class="a" style="left:21.2px;top:33.1px" width="4.2" height="4.2" viewBox="0 0 5 5"><path d="M4.4 0.6 L1.8 3.2" stroke="#a8a8a8" stroke-width="0.9"/><path d="M1.7 3 L2 3.4 C1.6 4.2 1 4.4 0.5 4.5 C0.9 4 0.9 3.4 1.7 3Z" fill="#a8a8a8"/></svg>
<svg class="a" style="left:28.7px;top:33.1px" width="4.2" height="4.2" viewBox="0 0 5 5"><path d="M2.5 0.4 V4.6 M0.4 2.5 H4.6" stroke="#a8a8a8" stroke-width="0.6"/><path d="M2.5 0 L3.3 1 H1.7Z M2.5 5 L3.3 4 H1.7Z M0 2.5 L1 1.7 V3.3Z M5 2.5 L4 1.7 V3.3Z" fill="#a8a8a8"/></svg>
<svg class="a" style="left:36.4px;top:33.1px" width="4.2" height="4.2" viewBox="0 0 5 5"><path d="M1.2 0.4 V3.8 H4.6 M0.4 1.2 H3.8 V4.6" stroke="#a0a0a0" stroke-width="0.6" fill="none"/></svg>
<svg class="a" style="left:44.4px;top:33.1px" width="4.2" height="4.2" viewBox="0 0 5 5"><rect x="0.8" y="2.4" width="3.6" height="2.4" fill="#a0a0a0"/><path d="M1.6 2.4 V1.6 A1 1 0 0 1 3.6 1.6 V2.4" fill="none" stroke="#a0a0a0" stroke-width="0.6"/></svg>
<div class="t" style="left:57.50px;top:33.66px;font-size:4.07px;color:#8a8a8a;transform:scaleX(0.86);transform-origin:0 0">Fill:</div>
<div class="t" style="left:66.10px;top:33.66px;font-size:4.07px;color:#6e6e6e;transform:scaleX(0.86);transform-origin:0 0">100%</div>
<div class="a" style="left:1.9px;top:40.3px;width:94.2px;height:0.6px;background:#3c3c3c"></div>
<div class="a" style="left:8.2px;top:40.90px;width:87.9px;height:12.72px;background:#686868"></div>
<div class="a" style="left:1.9px;top:53.82px;width:94.2px;height:0.5px;background:#4a4a4a"></div>
<div class="a" style="left:3.4px;top:45.50px;width:3.6px;height:3.6px;border:0.4px solid #5c5c5c"></div>
<div class="a" style="left:12px;top:42.30px;width:7.6px;height:10px;background-color:#fff;background-image:linear-gradient(45deg,#dedede 25%,transparent 25%,transparent 75%,#dedede 75%),linear-gradient(45deg,#dedede 25%,transparent 25%,transparent 75%,#dedede 75%);background-size:2px 2px;background-position:0 0,1px 1px"></div>
<div class="a" style="left:13.6px;top:43.70px;width:4.4px;height:7px;background:#b89a86;opacity:0.8"></div>
<div class="a" style="left:14.6px;top:46.70px;width:2.4px;height:3px;background:#55607a;opacity:0.8"></div>
<svg class="a" style="left:10.8px;top:41.10px" width="10" height="12.4" viewBox="0 0 10 12.4"><path d="M0.3 2 V0.3 H2 M8 0.3 H9.7 V2 M9.7 10.4 V12.1 H8 M2 12.1 H0.3 V10.4" stroke="#f4f4f4" stroke-width="0.6" fill="none"/></svg>
<div class="t" style="left:23.60px;top:46.01px;font-size:4.19px;color:#f4f4f4;transform:scaleX(0.86);transform-origin:0 0">Layer 8</div>
<div class="a" style="left:1.9px;top:67.44px;width:94.2px;height:0.5px;background:#4a4a4a"></div>
<div class="a" style="left:3.4px;top:59.12px;width:3.6px;height:3.6px;border:0.4px solid #5c5c5c"></div>
<div class="a" style="left:12px;top:55.92px;width:7.6px;height:10px;background-color:#fff;background-image:linear-gradient(45deg,#dedede 25%,transparent 25%,transparent 75%,#dedede 75%),linear-gradient(45deg,#dedede 25%,transparent 25%,transparent 75%,#dedede 75%);background-size:2px 2px;background-position:0 0,1px 1px"></div>
<div class="t" style="left:23.60px;top:59.63px;font-size:4.19px;color:#d4d4d4;transform:scaleX(0.86);transform-origin:0 0">Layer 7</div>
<div class="a" style="left:1.9px;top:81.06px;width:94.2px;height:0.5px;background:#4a4a4a"></div>
<div class="a" style="left:3.4px;top:72.74px;width:3.6px;height:3.6px;border:0.4px solid #5c5c5c"></div>
<div class="a" style="left:12px;top:69.54px;width:7.6px;height:10px;background-color:#fff;background-image:linear-gradient(45deg,#dedede 25%,transparent 25%,transparent 75%,#dedede 75%),linear-gradient(45deg,#dedede 25%,transparent 25%,transparent 75%,#dedede 75%);background-size:2px 2px;background-position:0 0,1px 1px"></div>
<div class="t" style="left:23.60px;top:73.25px;font-size:4.19px;color:#d4d4d4;transform:scaleX(0.86);transform-origin:0 0">Layer 6</div>
<div class="a" style="left:1.9px;top:94.68px;width:94.2px;height:0.5px;background:#4a4a4a"></div>
<div class="a" style="left:3.4px;top:86.36px;width:3.6px;height:3.6px;border:0.4px solid #5c5c5c"></div>
<div class="a" style="left:12px;top:83.16px;width:7.6px;height:10px;background-color:#fff;background-image:linear-gradient(45deg,#dedede 25%,transparent 25%,transparent 75%,#dedede 75%),linear-gradient(45deg,#dedede 25%,transparent 25%,transparent 75%,#dedede 75%);background-size:2px 2px;background-position:0 0,1px 1px"></div>
<div class="a" style="left:13.6px;top:84.56px;width:4.4px;height:7px;background:#b89a86;opacity:0.8"></div>
<div class="a" style="left:14.6px;top:87.56px;width:2.4px;height:3px;background:#55607a;opacity:0.8"></div>
<div class="t" style="left:23.60px;top:86.87px;font-size:4.19px;color:#d4d4d4;transform:scaleX(0.86);transform-origin:0 0">Layer 5</div>
<div class="a" style="left:1.9px;top:108.30px;width:94.2px;height:0.5px;background:#4a4a4a"></div>
<svg class="a" style="left:2.8px;top:99.58px" width="5" height="3.6" viewBox="0 0 5 3.6"><path d="M0.2 1.8 C1.4 0.2 3.6 0.2 4.8 1.8 C3.6 3.4 1.4 3.4 0.2 1.8Z" fill="#e6e6e6"/><circle cx="2.5" cy="1.8" r="0.8" fill="#444"/></svg>
<div class="a" style="left:12px;top:96.78px;width:7.6px;height:10px;background:#d0603e"></div>
<div class="t" style="left:23.60px;top:100.49px;font-size:4.19px;color:#d4d4d4;transform:scaleX(0.86);transform-origin:0 0">Layer 4</div>
<div class="a" style="left:1.9px;top:121.92px;width:94.2px;height:0.5px;background:#4a4a4a"></div>
<div class="a" style="left:3.4px;top:113.60px;width:3.6px;height:3.6px;border:0.4px solid #5c5c5c"></div>
<div class="a" style="left:12px;top:110.40px;width:7.6px;height:10px;background-color:#fff;background-image:linear-gradient(45deg,#dedede 25%,transparent 25%,transparent 75%,#dedede 75%),linear-gradient(45deg,#dedede 25%,transparent 25%,transparent 75%,#dedede 75%);background-size:2px 2px;background-position:0 0,1px 1px"></div>
<div class="t" style="left:23.60px;top:114.11px;font-size:4.19px;color:#d4d4d4;transform:scaleX(0.86);transform-origin:0 0">Layer 3</div>
<div class="a" style="left:0;top:206.4px;width:101.5px;height:0.6px;background:#454545"></div>
<svg class="a" style="left:28.6px;top:208.8px" width="5" height="5" viewBox="0 0 6 6"><path d="M0.8 3 H2.6 M3.4 3 H5.2" stroke="#7a7a7a" stroke-width="1.2" stroke-linecap="round"/></svg>
<svg class="a" style="left:39.0px;top:208.8px" width="5" height="5" viewBox="0 0 6 6"><text x="0.2" y="4.6" font-family="Liberation Serif,serif" font-style="italic" font-weight="bold" font-size="5" fill="#e0e0e0">fx</text></svg>
<svg class="a" style="left:48.5px;top:208.8px" width="5" height="5" viewBox="0 0 6 6"><rect x="0.4" y="0.8" width="5.2" height="4.4" fill="#e0e0e0"/><circle cx="3" cy="3" r="1.3" fill="#535353"/></svg>
<svg class="a" style="left:58.4px;top:208.8px" width="5" height="5" viewBox="0 0 6 6"><circle cx="3" cy="3" r="2.3" fill="none" stroke="#e0e0e0" stroke-width="0.7"/><path d="M3 0.7 A2.3 2.3 0 0 1 3 5.3Z" fill="#e0e0e0"/></svg>
<svg class="a" style="left:67.7px;top:208.8px" width="5" height="5" viewBox="0 0 6 6"><path d="M0.4 1.2 H2.4 L3 2 H5.6 V5 H0.4Z" fill="#e0e0e0"/></svg>
<svg class="a" style="left:76.6px;top:208.8px" width="5" height="5" viewBox="0 0 6 6"><path d="M0.8 0.8 H5.2 V3.6 L3.6 5.2 H0.8Z" fill="none" stroke="#e0e0e0" stroke-width="0.7"/><path d="M3.6 5.2 V3.6 H5.2" fill="none" stroke="#e0e0e0" stroke-width="0.5"/></svg>
<svg class="a" style="left:86.5px;top:208.8px" width="5" height="5" viewBox="0 0 6 6"><path d="M1.2 1.6 H4.8 L4.4 5.4 H1.6Z" fill="none" stroke="#e0e0e0" stroke-width="0.7"/><path d="M0.6 1.4 H5.4 M2.2 0.6 H3.8" stroke="#e0e0e0" stroke-width="0.7"/></svg>
</div>
<div class="a" style="left:799px;top:232.4px;width:40px;height:6.4px;background:#ffffe1;border:0.4px solid #767676"></div>
<div class="t" style="left:800.20px;top:234.09px;font-size:4.16px;color:#1a1a1a;transform:scaleX(0.86);transform-origin:0 0">Indicates layer visibility</div>
<div class="a" id="color" style="left:791.5px;top:354.6px;width:101.5px;height:104.8px;background:#535353">
<div class="a" style="left:0;top:0;width:101.5px;height:8.6px;background:#424242"></div>
<div class="a" style="left:0;top:0;width:14.6px;height:8.8px;background:#535353"></div>
<div class="t" style="left:2.70px;top:3.04px;font-size:4.3px;color:#f0f0f0;font-weight:bold;transform:scaleX(0.86);transform-origin:0 0">Color</div>
<svg class="a" style="left:95.4px;top:3px" width="4" height="3.2" viewBox="0 0 4 3.2"><path d="M0 0.4 H4 M0 1.6 H4 M0 2.8 H4" stroke="#c4c4c4" stroke-width="0.55"/></svg>
<svg class="a" style="left:3.4px;top:13.2px" width="11" height="11" viewBox="0 0 11 11"><rect x="3.8" y="4" width="6.2" height="6.2" fill="#3a3a3a" stroke="#c4c4c4" stroke-width="0.5"/><rect x="0.5" y="0.5" width="6.4" height="6.6" fill="#7b899e" stroke="#b4bcc8" stroke-width="0.5"/></svg>
<div class="a" style="left:15.7px;top:11.7px;width:67.1px;height:88.7px;background:linear-gradient(to top,#000,rgba(0,0,0,0)),linear-gradient(to right,#fff,#1670dc)"></div>
<svg class="a" style="left:25px;top:47.6px" width="5" height="5" viewBox="0 0 5 5"><circle cx="2.4" cy="2.4" r="1.7" fill="none" stroke="#e4e4e4" stroke-width="0.55"/></svg>
<div class="a" style="left:88.3px;top:11.7px;width:7.6px;height:88.7px;background:linear-gradient(to bottom,#ff0000 0%,#ff00ff 16.6%,#0000ff 33.3%,#00ffff 50%,#00ff00 66.6%,#ffff00 83.3%,#ff0000 100%)"></div>
<svg class="a" style="left:85.4px;top:46.2px" width="2.6" height="3" viewBox="0 0 2.6 3"><path d="M0 0 L2.6 1.5 L0 3Z" fill="#f0f0f0"/></svg>
</div>
<!-- TASKBAR -->
<div class="a" id="taskbar">
<svg class="a" style="left:5.4px;top:3.6px" width="6" height="6" viewBox="0 0 6 6"><path d="M0 0.8 L2.6 0.4 V2.8 H0Z M3 0.35 L6 0 V2.8 H3Z M0 3.2 H2.6 V5.6 L0 5.2Z M3 3.2 H6 V6 L3 5.65Z" fill="#fff"/></svg>
<svg class="a" style="left:22px;top:3.4px" width="6.4" height="6.4" viewBox="0 0 6.4 6.4"><circle cx="3.8" cy="2.6" r="2" fill="none" stroke="#f0f0f0" stroke-width="0.7"/><path d="M2.4 4 L0.5 5.9" stroke="#f0f0f0" stroke-width="0.8"/></svg>
<svg class="a" style="left:37.6px;top:3.8px" width="8" height="5.6" viewBox="0 0 8 5.6"><rect x="1.8" y="0.4" width="4.4" height="4.8" fill="none" stroke="#f0f0f0" stroke-width="0.6"/><path d="M1 1 H0.3 V4.6 H1 M7 1 H7.7 V4.6 H7" stroke="#f0f0f0" stroke-width="0.6" fill="none"/></svg>
<svg class="a" style="left:55.8px;top:3.4px" width="7.6" height="6.4" viewBox="0 0 7.6 6.4"><path d="M0 0.6 H2.8 L3.4 1.4 H7.6 V6.2 H0Z" fill="#f3c64a"/><rect x="0" y="2.2" width="7.6" height="4" fill="#fbe08a"/><rect x="2.4" y="4.2" width="2.8" height="2" fill="#4a90d9"/></svg>
<svg class="a" style="left:73.4px;top:3px" width="7.2" height="7.2" viewBox="0 0 7.2 7.2"><circle cx="3.6" cy="3.6" r="3.5" fill="#e2423a"/><path d="M3.6 3.6 L0.6 1.8 A3.5 3.5 0 0 0 1.8 6.6Z" fill="#3aa757"/><path d="M3.6 3.6 L1.8 6.6 A3.5 3.5 0 0 0 7.1 3.6Z" fill="#f6c431"/><path d="M3.6 3.6 L7.1 3.6 A3.5 3.5 0 0 0 0.6 1.8Z" fill="#e2423a"/><circle cx="3.6" cy="3.6" r="1.7" fill="#fff"/><circle cx="3.6" cy="3.6" r="1.3" fill="#4a88e8"/></svg>
<svg class="a" style="left:90.4px;top:3px" width="7.2" height="7.2" viewBox="0 0 7.2 7.2"><circle cx="3.6" cy="3.6" r="3.5" fill="#1ed760"/><path d="M1.6 2.6 C3 2.2 4.6 2.4 5.8 3 M1.8 3.8 C3 3.5 4.2 3.7 5.3 4.2 M2 4.9 C3 4.7 3.9 4.8 4.8 5.3" stroke="#0c1a10" stroke-width="0.6" fill="none" stroke-linecap="round"/></svg>
<div class="a" style="left:104px;top:0;width:14.4px;height:13px;background:#2c3038"></div>
<div class="a" style="left:104px;top:12.2px;width:14.4px;height:0.8px;background:#5a7aa0"></div>
<svg class="a" style="left:107.4px;top:3px" width="7.4" height="7" viewBox="0 0 7.4 7"><rect x="0.3" y="0.3" width="6.8" height="6.4" fill="#0a2240" stroke="#4a8ad0" stroke-width="0.6"/></svg>
<div class="t" style="left:108.90px;top:5.45px;font-size:4.88px;color:#8cc4ff;font-weight:bold;transform:scaleX(0.86);transform-origin:0 0;letter-spacing:-0.1px">Ps</div>
<svg class="a" style="left:124px;top:3.4px" width="8.4" height="6.4" viewBox="0 0 8.4 6.4"><path d="M0.2 2.2 L4.2 0 L8.2 2.2 V6.2 H0.2Z" fill="#f4f4f4"/><path d="M0.2 2.2 L4.2 4.6 L8.2 2.2" fill="none" stroke="#10141c" stroke-width="0.6"/></svg>
<svg class="a" style="left:141.4px;top:3px" width="7.2" height="7.2" viewBox="0 0 7.2 7.2"><circle cx="3.6" cy="3.6" r="2.5" fill="none" stroke="#f0562a" stroke-width="1.7"/><path d="M4.4 0 L3.2 2 M2.8 7.2 L4 5.2" stroke="#f0562a" stroke-width="1.1"/></svg>
<svg class="a" style="left:863.6px;top:3.6px" width="6" height="6" viewBox="0 0 6 6"><path d="M5.2 0.8 L2 4" stroke="#e4e4e4" stroke-width="1.2"/><path d="M0.6 5.6 C0.8 4.4 1.4 4 2.2 3.6 L2.6 4 C2.2 4.8 1.6 5.4 0.6 5.6Z" fill="#e4e4e4"/></svg>
<div class="t" style="left:879.80px;top:2.26px;font-size:4.07px;color:#f4f4f4;transform:scaleX(0.86);transform-origin:0 0">20:22</div>
<div class="t" style="left:876.20px;top:8.66px;font-size:4.07px;color:#f4f4f4;transform:scaleX(0.86);transform-origin:0 0">26-7-2017</div>
</div>
</body></html>
